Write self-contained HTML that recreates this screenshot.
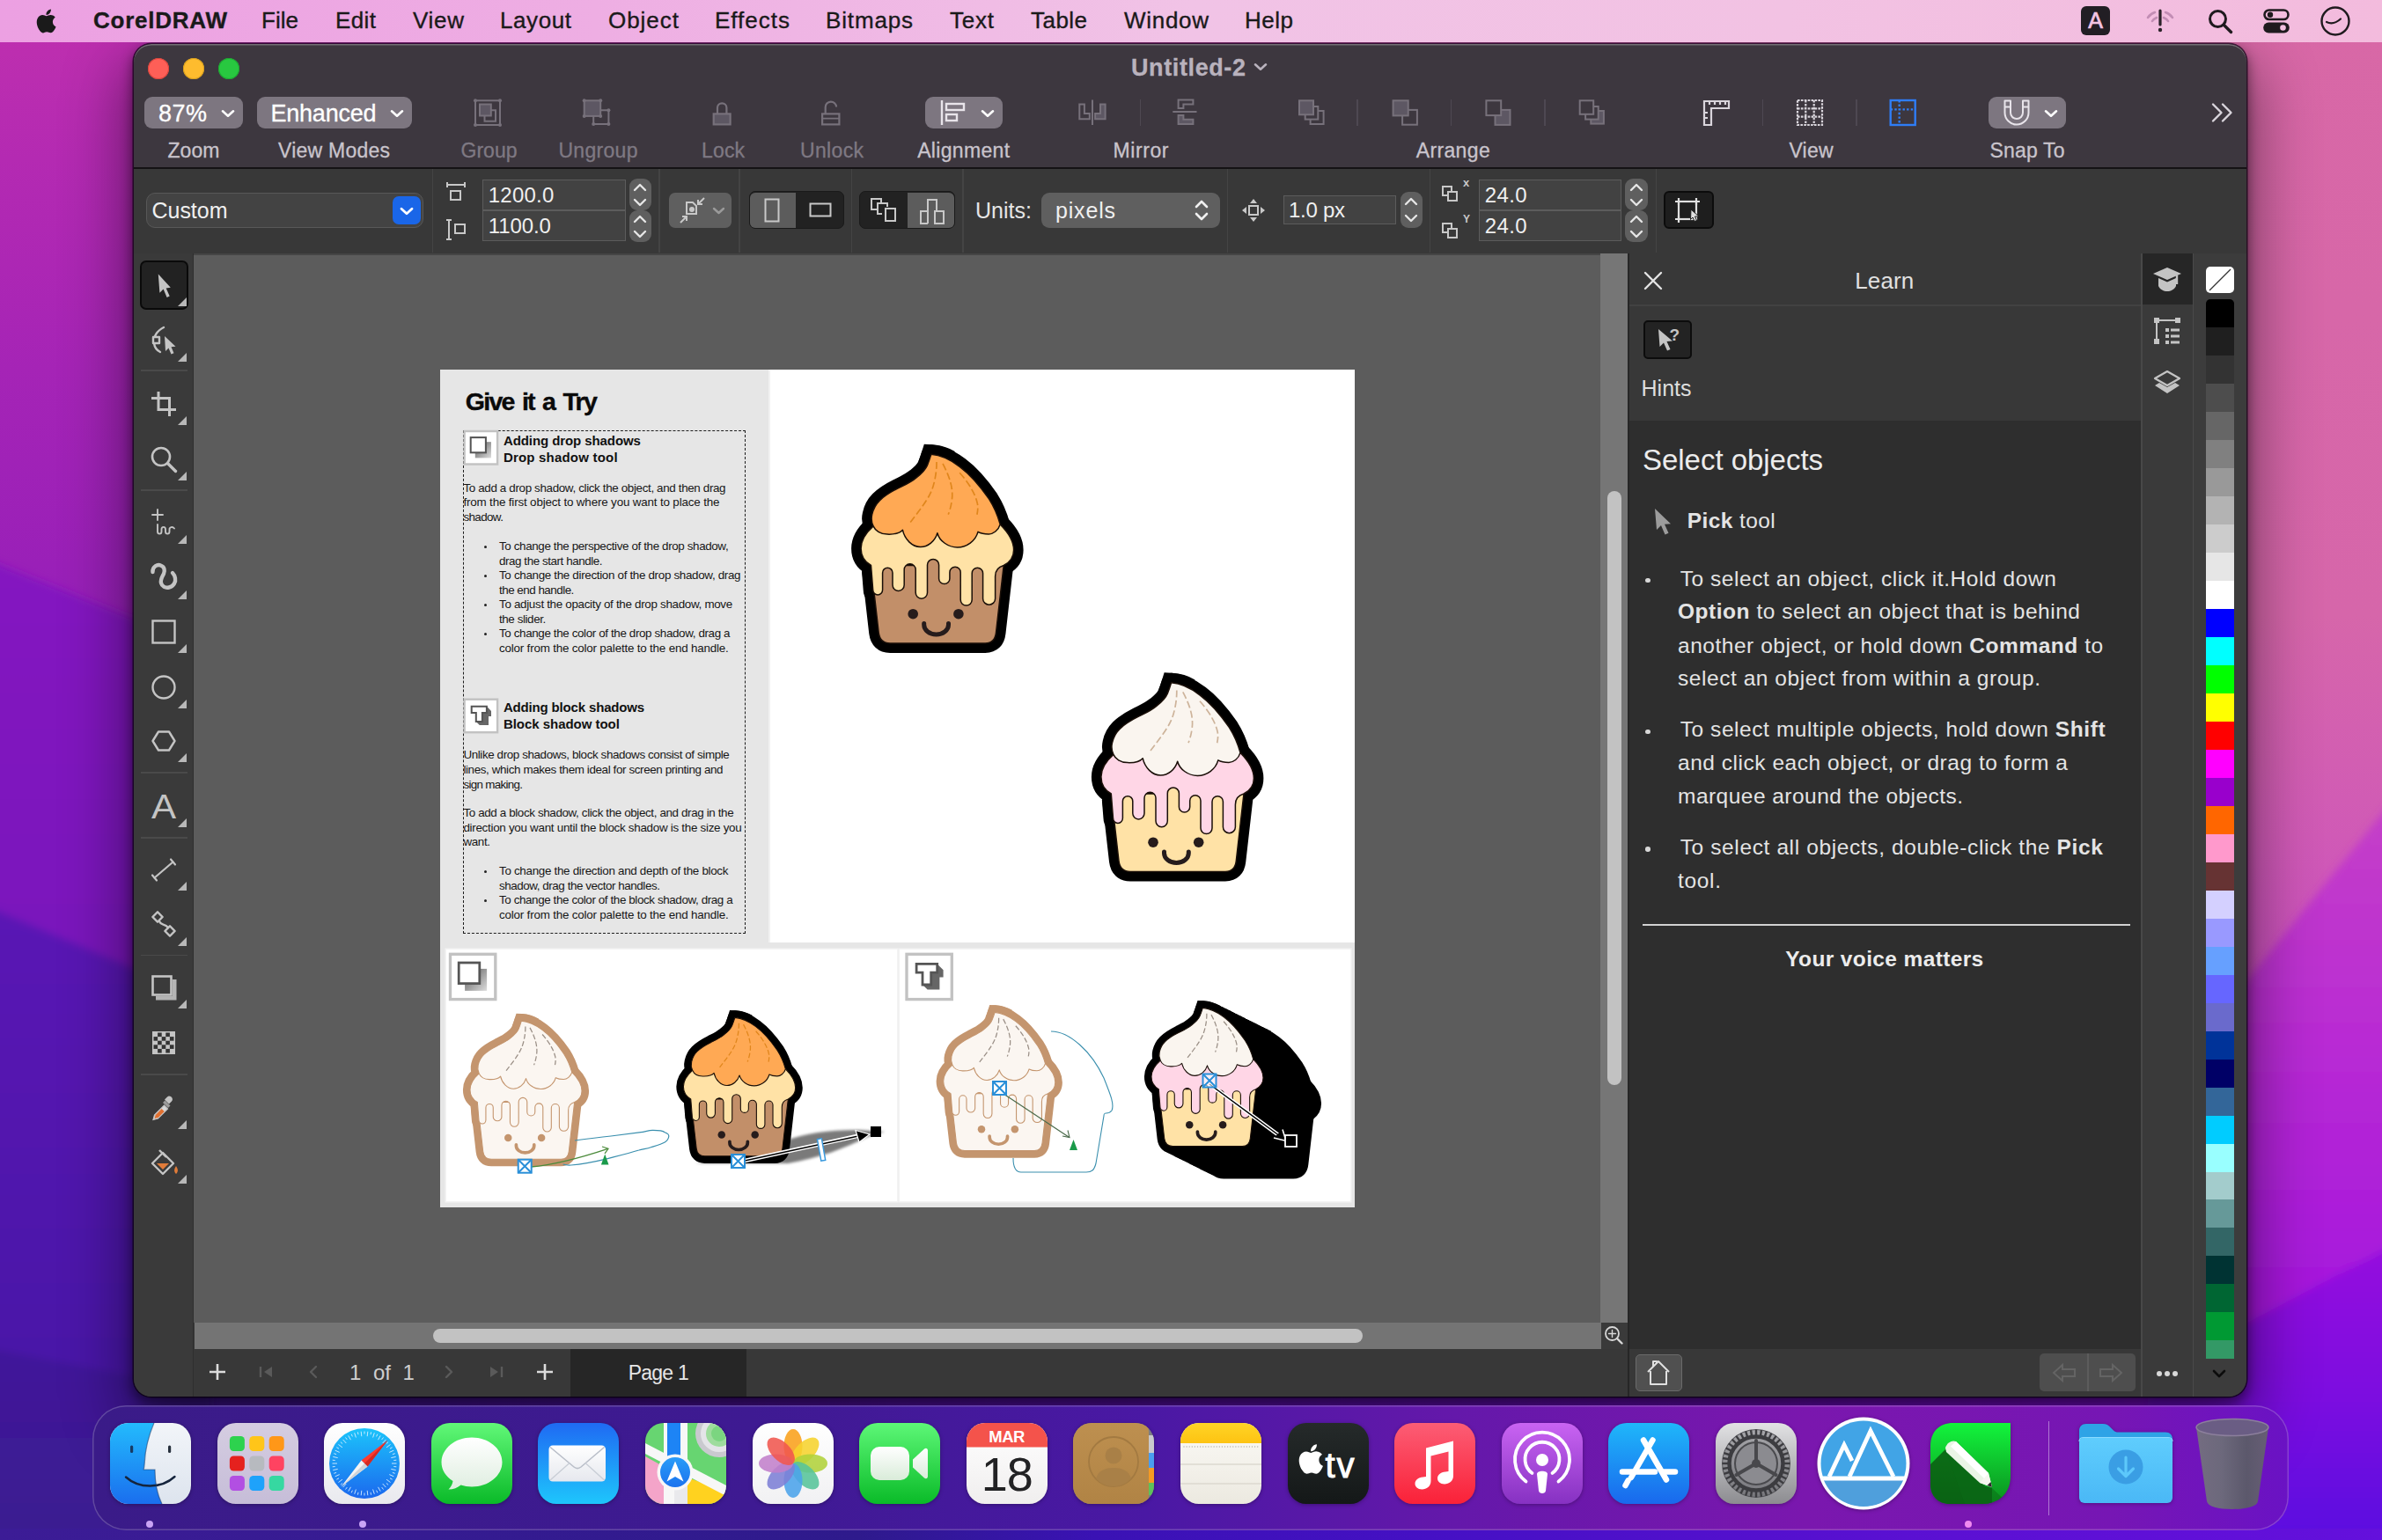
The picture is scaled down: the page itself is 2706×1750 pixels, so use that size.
<!DOCTYPE html>
<html lang="en"><head><meta charset="utf-8"><title>CorelDRAW - Untitled-2</title>
<style>
*{box-sizing:border-box;margin:0;padding:0}
html,body{width:2706px;height:1750px;overflow:hidden;background:#5a14b0}
body{position:relative;font-family:"Liberation Sans",sans-serif;}
.a{position:absolute;display:block}
.t{position:absolute;white-space:nowrap;line-height:1;display:block}
svg{overflow:visible}
.ln{stroke:#cfcfcf;fill:none;stroke-width:2.4;stroke-linecap:round;stroke-linejoin:round}
</style></head>
<body>
<div class="a" style="left:0.0px;top:0.0px;width:2706.0px;height:1750.0px;background:linear-gradient(180deg,#c030ae 0px,#b42ab2 180px,#a524b6 420px,#9a20b8 640px,#9420ba 760px,#8a1cbc 1000px,#6a16b8 1100px,#5612b2 1200px,#5012ae 1400px,#4a14a6 1560px,#3f1a98 1750px);"></div><div class="a" style="left:0.0px;top:0.0px;width:2706.0px;height:1750.0px;background:linear-gradient(180deg,#d868a6 0px,#d666aa 700px,#d05ab6 950px,#ca4ec0 1150px,#c040cc 1300px,#a818dc 1450px,#8a0ce0 1580px,#5a08dc 1750px);-webkit-mask-image:linear-gradient(90deg,transparent 0px,transparent 300px,rgba(0,0,0,.55) 1500px,#000 2450px);mask-image:linear-gradient(90deg,transparent 0px,transparent 300px,rgba(0,0,0,.55) 1500px,#000 2450px);"></div><svg class="a" style="left:0.0px;top:0.0px;" width="2706" height="1750" viewBox="0 0 2706 1750"><defs><filter id="wb" x="-10%" y="-10%" width="120%" height="120%"><feGaussianBlur stdDeviation="5"/></filter><linearGradient id="wa" gradientUnits="userSpaceOnUse" x1="0" y1="642" x2="0" y2="1040"><stop offset="0" stop-color="#8419c0"/><stop offset="1" stop-color="#7a18bc"/></linearGradient><linearGradient id="wbb" gradientUnits="userSpaceOnUse" x1="0" y1="1036" x2="0" y2="1530"><stop offset="0" stop-color="#5a13b4"/><stop offset="1" stop-color="#4a12a8"/></linearGradient><linearGradient id="wc" gradientUnits="userSpaceOnUse" x1="0" y1="1535" x2="0" y2="1750"><stop offset="0" stop-color="#41179a"/><stop offset="1" stop-color="#3a1c90"/></linearGradient><linearGradient id="ra" gradientUnits="userSpaceOnUse" x1="0" y1="925" x2="0" y2="1460"><stop offset="0" stop-color="#c43ec8"/><stop offset="0.5" stop-color="#b82ad4"/><stop offset="1" stop-color="#a618dc"/></linearGradient><linearGradient id="rb" gradientUnits="userSpaceOnUse" x1="0" y1="1422" x2="0" y2="1750"><stop offset="0" stop-color="#9410de"/><stop offset="0.5" stop-color="#7c0ce0"/><stop offset="1" stop-color="#5a0ce0"/></linearGradient></defs><g filter="url(#wb)"><path d="M-20 634L240 738V1800H-20Z" fill="url(#wa)"/><path d="M-20 1028L240 1137V1800H-20Z" fill="url(#wbb)"/><path d="M-20 1531L240 1580V1800H-20Z" fill="url(#wc)"/><path d="M2440 1253L2730 895V1800H2440Z" fill="url(#ra)"/><path d="M2440 1563L2730 1409V1800H2440Z" fill="url(#rb)"/></g></svg><div class="a" style="left:152.0px;top:50.0px;width:2400.0px;height:1537.0px;border-radius:20px;box-shadow:0 30px 70px 10px rgba(0,0,0,.45),0 6px 14px 2px rgba(0,0,0,.45),0 0 0 1.500px rgba(20,0,30,.7);background:#383838;"></div><div class="a" style="left:0.0px;top:0.0px;width:2706.0px;height:48.0px;background:linear-gradient(90deg,#eca0e2 0%,#eeaee3 25%,#f1c3e6 50%,#f2c2e3 75%,#f3bbdd 100%);"></div><svg class="a" style="left:38.0px;top:8.0px;" width="30" height="32" viewBox="0 0 30 32"><path fill="#1a1a1a" d="M21.9 16.9c0-3.4 2.8-5 2.9-5.1-1.6-2.3-4-2.6-4.9-2.7-2.1-.2-4.1 1.2-5.1 1.2-1.1 0-2.7-1.2-4.4-1.2-2.3 0-4.4 1.3-5.5 3.4-2.4 4.1-.6 10.1 1.7 13.5 1.1 1.6 2.5 3.4 4.2 3.4 1.7-.1 2.3-1.1 4.4-1.1 2 0 2.6 1.1 4.4 1 1.8 0 3-1.6 4.1-3.3 1.3-1.9 1.8-3.7 1.9-3.8-.1 0-3.6-1.400-3.700-5.300zM18.500 6.900c.900-1.100 1.600-2.700 1.400-4.300-1.400.1-3 .9-4 2.100-.900 1-1.700 2.600-1.400 4.200 1.500.100 3-.800 4-2z"/></svg><span id="t1" class="t" style="top:9.9px;font-size:26px;color:#1a1a1a;font-weight:700;letter-spacing:0.76px;left:106.0px;-webkit-text-stroke:.350px #1a1a1a;">CorelDRAW</span><span id="t2" class="t" style="top:9.9px;font-size:26px;color:#1a1a1a;letter-spacing:0.03px;left:297.0px;-webkit-text-stroke:.350px #1a1a1a;">File</span><span id="t3" class="t" style="top:9.9px;font-size:26px;color:#1a1a1a;letter-spacing:0.40px;left:381.0px;-webkit-text-stroke:.350px #1a1a1a;">Edit</span><span id="t4" class="t" style="top:9.9px;font-size:26px;color:#1a1a1a;letter-spacing:0.70px;left:469.0px;-webkit-text-stroke:.350px #1a1a1a;">View</span><span id="t5" class="t" style="top:9.9px;font-size:26px;color:#1a1a1a;letter-spacing:0.58px;left:568.0px;-webkit-text-stroke:.350px #1a1a1a;">Layout</span><span id="t6" class="t" style="top:9.9px;font-size:26px;color:#1a1a1a;letter-spacing:0.97px;left:691.0px;-webkit-text-stroke:.350px #1a1a1a;">Object</span><span id="t7" class="t" style="top:9.9px;font-size:26px;color:#1a1a1a;letter-spacing:1.00px;left:812.0px;-webkit-text-stroke:.350px #1a1a1a;">Effects</span><span id="t8" class="t" style="top:9.9px;font-size:26px;color:#1a1a1a;letter-spacing:0.85px;left:938.0px;-webkit-text-stroke:.350px #1a1a1a;">Bitmaps</span><span id="t9" class="t" style="top:9.9px;font-size:26px;color:#1a1a1a;letter-spacing:0.77px;left:1079.0px;-webkit-text-stroke:.350px #1a1a1a;">Text</span><span id="t10" class="t" style="top:9.9px;font-size:26px;color:#1a1a1a;letter-spacing:0.46px;left:1171.0px;-webkit-text-stroke:.350px #1a1a1a;">Table</span><span id="t11" class="t" style="top:9.9px;font-size:26px;color:#1a1a1a;letter-spacing:0.70px;left:1277.0px;-webkit-text-stroke:.350px #1a1a1a;">Window</span><span id="t12" class="t" style="top:9.9px;font-size:26px;color:#1a1a1a;letter-spacing:0.51px;left:1414.0px;-webkit-text-stroke:.350px #1a1a1a;">Help</span><div class="a" style="left:2364.0px;top:7.0px;width:33.0px;height:33.0px;background:#221e24;border-radius:6px;"></div><span id="t13" class="t" style="top:11.3px;font-size:25px;color:#f3c4e2;left:2380.5px;transform:translateX(-50%);-webkit-text-stroke:.700px #f3c4e2;">A</span><svg class="a" style="left:2436.0px;top:8.0px;" width="36" height="32" viewBox="0 0 36 32"><g fill="none" stroke="#c28db4" stroke-width="2.6" stroke-linecap="round"><path d="M4 12c2-3 5-5 8-6"/><path d="M32 12c-2-3-5-5-8-6"/><path d="M9 16c1-2 3-3 5-4"/><path d="M27 16c-1-2-3-3-5-4"/></g><path d="M18 4v16" stroke="#2a2228" stroke-width="3.2" stroke-linecap="round"/><circle cx="18" cy="26" r="2.2" fill="#2a2228"/></svg><svg class="a" style="left:2506.0px;top:8.0px;" width="32" height="32" viewBox="0 0 32 32"><circle cx="13.5" cy="13.500" r="9" fill="none" stroke="#1f1a1e" stroke-width="3"/><path d="M20.500 20.500l8 8" stroke="#1f1a1e" stroke-width="3.400" stroke-linecap="round"/></svg><svg class="a" style="left:2571.0px;top:10.0px;" width="30" height="28" viewBox="0 0 30 28"><rect x="1.500" y="1.500" width="27" height="10.500" rx="5.250" fill="none" stroke="#1f1a1e" stroke-width="2.600"/><circle cx="8" cy="6.750" r="3.200" fill="#1f1a1e"/><rect x="0.200" y="15.500" width="29.600" height="12" rx="6" fill="#1f1a1e"/><circle cx="22.500" cy="21.500" r="3.300" fill="#f3bfe0"/></svg><svg class="a" style="left:2635.0px;top:6.0px;" width="36" height="36" viewBox="0 0 36 36"><circle cx="18" cy="18" r="15.500" fill="none" stroke="#1f1a1e" stroke-width="2.400"/><path d="M8 19c5 2.500 11 1 16-3.500" fill="none" stroke="#1f1a1e" stroke-width="2.200" stroke-linecap="round"/></svg><div class="a" style="left:0.0px;top:1737.0px;width:2706.0px;height:13.0px;background:linear-gradient(90deg,#3c1c96 0%,#2e1a8c 36%,#3a12b4 46%,#4510c4 60%,#5a10d2 80%,#6410dc 100%);"></div><div class="a" style="left:105.0px;top:1597.0px;width:2495.0px;height:142.0px;border-radius:38px;background:linear-gradient(90deg,#3a1b88 0%,#3e1a92 30%,#4a18a4 48%,#6418aa 62%,#7a17ae 78%,#7616b4 92%,#6a12c4 100%);box-shadow:inset 0 0 0 1.500px rgba(255,255,255,.2);"></div><svg class="a" style="left:125.0px;top:1617px;filter:drop-shadow(0 1.500px 2px rgba(0,0,0,.3));" width="92" height="92" viewBox="0 0 92 92"><defs><clipPath id="ck0"><rect width="92" height="92" rx="21"/></clipPath><linearGradient id="f0a" x1="0" y1="0" x2="0" y2="1"><stop offset="0" stop-color="#23bbfd"/><stop offset="1" stop-color="#1a6eee"/></linearGradient><linearGradient id="f0b" x1="0" y1="0" x2="0" y2="1"><stop offset="0" stop-color="#f2f5f9"/><stop offset="1" stop-color="#dde4ee"/></linearGradient></defs><g clip-path="url(#ck0)"><rect width="92" height="92" fill="url(#f0b)"/><path d="M50 0C44 14 40 30 39.300 45C39 49 38.600 51.500 38.200 53L51 53C51 68 54 82 59 92L0 92L0 0Z" fill="url(#f0a)"/><rect x="23" y="25.500" width="3.200" height="8.500" rx="1.600" fill="#173a63"/><rect x="66" y="25.500" width="3.200" height="8.500" rx="1.600" fill="#26303c"/><path d="M18 61.500C33 75 58 75 73.500 61" fill="none" stroke="#15243c" stroke-width="2.400" stroke-linecap="round"/><path d="M50 0C44 14 40 30 39.300 45C39 49 38.600 51.500 38.200 53L51 53C51 68 54 82 59 92" fill="none" stroke="#1a3a6a" stroke-width="1.200" opacity=".55"/></g></svg><svg class="a" style="left:246.6px;top:1617px;filter:drop-shadow(0 1.500px 2px rgba(0,0,0,.3));" width="92" height="92" viewBox="0 0 92 92"><defs><clipPath id="ck1"><rect width="92" height="92" rx="21"/></clipPath><linearGradient id="l1" x1="0" y1="0" x2="0" y2="1"><stop offset="0" stop-color="#d5cde1"/><stop offset="1" stop-color="#c6bdd8"/></linearGradient></defs><g clip-path="url(#ck1)"><rect width="92" height="92" fill="url(#l1)"/><rect x="13.9" y="15.0" width="17" height="17" rx="4.500" fill="#2dd24e"/><rect x="36.3" y="15.0" width="17" height="17" rx="4.500" fill="#ffc519"/><rect x="58.7" y="15.0" width="17" height="17" rx="4.500" fill="#ff9718"/><rect x="13.9" y="37.5" width="17" height="17" rx="4.500" fill="#e5211e"/><rect x="36.3" y="37.5" width="17" height="17" rx="4.500" fill="#b7babf"/><rect x="58.7" y="37.5" width="17" height="17" rx="4.500" fill="#ff4361"/><rect x="13.9" y="60.0" width="17" height="17" rx="4.500" fill="#b24fe2"/><rect x="36.3" y="60.0" width="17" height="17" rx="4.500" fill="#1ea2fb"/><rect x="58.7" y="60.0" width="17" height="17" rx="4.500" fill="#36d8a1"/></g></svg><svg class="a" style="left:368.2px;top:1617px;filter:drop-shadow(0 1.500px 2px rgba(0,0,0,.3));" width="92" height="92" viewBox="0 0 92 92"><defs><clipPath id="ck2"><rect width="92" height="92" rx="21"/></clipPath><linearGradient id="s2" x1="0" y1="0" x2="0" y2="1"><stop offset="0" stop-color="#1cc4fb"/><stop offset="1" stop-color="#1b68ee"/></linearGradient><linearGradient id="s2b" x1="0" y1="0" x2="0" y2="1"><stop offset="0" stop-color="#ffffff"/><stop offset="1" stop-color="#e9e9ee"/></linearGradient></defs><g clip-path="url(#ck2)"><rect width="92" height="92" fill="url(#s2b)"/><circle cx="46" cy="46" r="40" fill="url(#s2)"/><g stroke="#d9efff" stroke-width="0.900"><path d="M77.0 46.0L82.5 46.0"/><path d="M79.3 49.5L82.3 49.8"/><path d="M76.3 52.4L81.7 53.6"/><path d="M77.9 56.4L80.7 57.3"/><path d="M74.3 58.6L79.3 60.8"/><path d="M75.0 62.8L77.6 64.2"/><path d="M71.1 64.2L75.5 67.5"/><path d="M70.9 68.4L73.1 70.4"/><path d="M66.7 69.0L70.4 73.1"/><path d="M65.7 73.1L67.5 75.5"/><path d="M61.5 72.8L64.2 77.6"/><path d="M59.6 76.6L60.8 79.3"/><path d="M55.6 75.5L57.3 80.7"/><path d="M53.0 78.8L53.6 81.7"/><path d="M49.2 76.8L49.8 82.3"/><path d="M46.0 79.5L46.0 82.5"/><path d="M42.8 76.8L42.2 82.3"/><path d="M39.0 78.8L38.4 81.7"/><path d="M36.4 75.5L34.7 80.7"/><path d="M32.4 76.6L31.2 79.3"/><path d="M30.5 72.8L27.8 77.6"/><path d="M26.3 73.1L24.5 75.5"/><path d="M25.3 69.0L21.6 73.1"/><path d="M21.1 68.4L18.9 70.4"/><path d="M20.9 64.2L16.5 67.5"/><path d="M17.0 62.8L14.4 64.2"/><path d="M17.7 58.6L12.7 60.8"/><path d="M14.1 56.4L11.3 57.3"/><path d="M15.7 52.4L10.3 53.6"/><path d="M12.7 49.5L9.7 49.8"/><path d="M15.0 46.0L9.5 46.0"/><path d="M12.7 42.5L9.7 42.2"/><path d="M15.7 39.6L10.3 38.4"/><path d="M14.1 35.6L11.3 34.7"/><path d="M17.7 33.4L12.7 31.2"/><path d="M17.0 29.2L14.4 27.7"/><path d="M20.9 27.8L16.5 24.5"/><path d="M21.1 23.6L18.9 21.6"/><path d="M25.3 23.0L21.6 18.9"/><path d="M26.3 18.9L24.5 16.5"/><path d="M30.5 19.2L27.7 14.4"/><path d="M32.4 15.4L31.2 12.7"/><path d="M36.4 16.5L34.7 11.3"/><path d="M39.0 13.2L38.4 10.3"/><path d="M42.8 15.2L42.2 9.7"/><path d="M46.0 12.5L46.0 9.5"/><path d="M49.2 15.2L49.8 9.7"/><path d="M53.0 13.2L53.6 10.3"/><path d="M55.6 16.5L57.3 11.3"/><path d="M59.6 15.4L60.8 12.7"/><path d="M61.5 19.2L64.2 14.4"/><path d="M65.7 18.9L67.5 16.5"/><path d="M66.7 23.0L70.4 18.9"/><path d="M70.9 23.6L73.1 21.6"/><path d="M71.1 27.8L75.5 24.5"/><path d="M75.0 29.2L77.6 27.7"/><path d="M74.3 33.4L79.3 31.2"/><path d="M77.9 35.6L80.7 34.7"/><path d="M76.3 39.6L81.7 38.4"/><path d="M79.3 42.5L82.3 42.2"/></g><path d="M72.500 19.500L42.500 42.500L49.500 49.500Z" fill="#ff3b30"/><path d="M19.500 72.500L42.500 42.500L49.500 49.500Z" fill="#f4f4f4"/><path d="M72.500 19.500L49.500 49.500L46 46Z" fill="#d42a22"/><path d="M19.500 72.500L49.500 49.500L46 46Z" fill="#cfd3d8"/></g></svg><svg class="a" style="left:489.8px;top:1617px;filter:drop-shadow(0 1.500px 2px rgba(0,0,0,.3));" width="92" height="92" viewBox="0 0 92 92"><defs><clipPath id="ck3"><rect width="92" height="92" rx="21"/></clipPath><linearGradient id="m3" x1="0" y1="0" x2="0" y2="1"><stop offset="0" stop-color="#61f878"/><stop offset="1" stop-color="#0aba28"/></linearGradient><linearGradient id="m3b" x1="0" y1="0" x2="0" y2="1"><stop offset="0" stop-color="#ffffff"/><stop offset="1" stop-color="#dfeee0"/></linearGradient></defs><g clip-path="url(#ck3)"><rect width="92" height="92" fill="url(#m3)"/><path d="M46 16.500C27 16.500 11.500 29 11.500 44.500C11.500 53.500 16.500 61 24.500 66C24 70 22 73 19.500 75.500C25 75.500 30 73.500 33.500 70.500C37.500 71.800 41.500 72.500 46 72.500C65 72.500 80.500 60 80.500 44.500C80.500 29 65 16.500 46 16.500Z" fill="url(#m3b)"/></g></svg><svg class="a" style="left:611.4px;top:1617px;filter:drop-shadow(0 1.500px 2px rgba(0,0,0,.3));" width="92" height="92" viewBox="0 0 92 92"><defs><clipPath id="ck4"><rect width="92" height="92" rx="21"/></clipPath><linearGradient id="ml" x1="0" y1="0" x2="0" y2="1"><stop offset="0" stop-color="#1f6af3"/><stop offset="1" stop-color="#1ec6fc"/></linearGradient><linearGradient id="mlb" x1="0" y1="0" x2="0" y2="1"><stop offset="0" stop-color="#ffffff"/><stop offset="1" stop-color="#e6e8ee"/></linearGradient></defs><g clip-path="url(#ck4)"><rect width="92" height="92" fill="url(#ml)"/><rect x="12.500" y="25.500" width="64.500" height="41" rx="4.500" fill="url(#mlb)"/><path d="M14 27.500L41 50C43.500 52 46.500 52 49 50L75.500 27.500" fill="none" stroke="#b9bec8" stroke-width="1.600"/><path d="M14 65L36 45.500M75.500 65L54 45.500" fill="none" stroke="#c9ced6" stroke-width="1.400"/></g></svg><svg class="a" style="left:733.0px;top:1617px;filter:drop-shadow(0 1.500px 2px rgba(0,0,0,.3));" width="92" height="92" viewBox="0 0 92 92"><defs><clipPath id="ck5"><rect width="92" height="92" rx="21"/></clipPath><linearGradient id="mp" x1="0" y1="0" x2="0" y2="1"><stop offset="0" stop-color="#2a9cf8"/><stop offset="1" stop-color="#1a73ee"/></linearGradient></defs><g clip-path="url(#ck5)"><rect width="92" height="92" fill="#67d571"/><path d="M0 38L40 60L40 92L0 92Z" fill="#f4a4c9"/><path d="M48 62L92 78L92 92L48 92Z" fill="#ffd21f"/><path d="M-2 22L94 72L94 84L-2 34Z" fill="#f7f7f7"/><path d="M21 -2L21 94L33 94L33 -2Z" fill="#f7f7f7"/><circle cx="84" cy="12" r="27" fill="#c9c9cf"/><circle cx="84" cy="12" r="21" fill="#e4e4e8"/><circle cx="84" cy="12" r="15" fill="#9edc9d"/><circle cx="84" cy="12" r="9" fill="#7bd580"/><rect x="25" y="-2" width="20" height="60" fill="#1d84f5"/><rect x="40" y="-2" width="8" height="96" fill="#f7f7f7"/><path d="M33 58L48 64L48 94L33 94Z" fill="#e9e9ec"/><circle cx="34" cy="56" r="20.500" fill="#f7f7f7"/><circle cx="34" cy="56" r="17" fill="url(#mp)"/><path d="M34 43.500L43.500 66.500L34 61L24.500 66.500Z" fill="#fff"/></g></svg><svg class="a" style="left:854.6px;top:1617px;filter:drop-shadow(0 1.500px 2px rgba(0,0,0,.3));" width="92" height="92" viewBox="0 0 92 92"><defs><clipPath id="ck6"><rect width="92" height="92" rx="21"/></clipPath><linearGradient id="ph" x1="0" y1="0" x2="0" y2="1"><stop offset="0" stop-color="#ffffff"/><stop offset="1" stop-color="#f1f1f3"/></linearGradient></defs><g clip-path="url(#ck6)"><rect width="92" height="92" fill="url(#ph)"/><ellipse cx="46" cy="26.500" rx="10.500" ry="19.500" fill="#f9a11b" opacity=".88" transform="rotate(0 46 46)"/><ellipse cx="46" cy="26.500" rx="10.500" ry="19.500" fill="#f6d32d" opacity=".88" transform="rotate(45 46 46)"/><ellipse cx="46" cy="26.500" rx="10.500" ry="19.500" fill="#b0d23a" opacity=".88" transform="rotate(90 46 46)"/><ellipse cx="46" cy="26.500" rx="10.500" ry="19.500" fill="#57c49a" opacity=".88" transform="rotate(135 46 46)"/><ellipse cx="46" cy="26.500" rx="10.500" ry="19.500" fill="#4ba3ea" opacity=".88" transform="rotate(180 46 46)"/><ellipse cx="46" cy="26.500" rx="10.500" ry="19.500" fill="#7d7fd6" opacity=".88" transform="rotate(225 46 46)"/><ellipse cx="46" cy="26.500" rx="10.500" ry="19.500" fill="#c27fcb" opacity=".88" transform="rotate(270 46 46)"/><ellipse cx="46" cy="26.500" rx="10.500" ry="19.500" fill="#f0564f" opacity=".88" transform="rotate(315 46 46)"/></g></svg><svg class="a" style="left:976.2px;top:1617px;filter:drop-shadow(0 1.500px 2px rgba(0,0,0,.3));" width="92" height="92" viewBox="0 0 92 92"><defs><clipPath id="ck7"><rect width="92" height="92" rx="21"/></clipPath><linearGradient id="ft" x1="0" y1="0" x2="0" y2="1"><stop offset="0" stop-color="#5df777"/><stop offset="1" stop-color="#0abb28"/></linearGradient><linearGradient id="ftb" x1="0" y1="0" x2="0" y2="1"><stop offset="0" stop-color="#ffffff"/><stop offset="1" stop-color="#d9ecd9"/></linearGradient></defs><g clip-path="url(#ck7)"><rect width="92" height="92" fill="url(#ft)"/><rect x="13" y="27" width="44" height="38" rx="10" fill="url(#ftb)"/><path d="M61 41.500L74 29.500C76 28 78 29 78 31.500L78 60.500C78 63 76 64 74 62.500L61 50.500Z" fill="url(#ftb)"/></g></svg><svg class="a" style="left:1097.8px;top:1617px;filter:drop-shadow(0 1.500px 2px rgba(0,0,0,.3));" width="92" height="92" viewBox="0 0 92 92"><defs><clipPath id="ck8"><rect width="92" height="92" rx="21"/></clipPath><linearGradient id="cl" x1="0" y1="0" x2="0" y2="1"><stop offset="0" stop-color="#ffffff"/><stop offset="1" stop-color="#f0eeee"/></linearGradient></defs><g clip-path="url(#ck8)"><rect width="92" height="92" fill="url(#cl)"/><rect width="92" height="27.500" fill="#f4534b"/></g></svg><span id="t14" class="t" style="top:1623.5px;font-size:18.5px;color:#fff;font-weight:700;letter-spacing:-0.57px;left:1143.5px;transform:translateX(-50%);">MAR</span><span id="t15" class="t" style="top:1648.1px;font-size:54px;color:#222224;left:1143.8px;transform:translateX(-50%);letter-spacing:-1px;">18</span><svg class="a" style="left:1219.4px;top:1617px;filter:drop-shadow(0 1.500px 2px rgba(0,0,0,.3));" width="92" height="92" viewBox="0 0 92 92"><defs><clipPath id="ck9"><rect width="92" height="92" rx="21"/></clipPath><linearGradient id="ct" x1="0" y1="0" x2="0" y2="1"><stop offset="0" stop-color="#be9050"/><stop offset="1" stop-color="#b08344"/></linearGradient></defs><g clip-path="url(#ck9)"><rect width="92" height="92" fill="#7d7d82"/><rect x="84" y="14" width="10" height="20" fill="#c9c9cd"/><rect x="84" y="34" width="10" height="17" fill="#4a9df0"/><rect x="84" y="51" width="10" height="17" fill="#f59a23"/><rect x="84" y="68" width="10" height="14" fill="#5ec15a"/><rect x="-4" y="-4" width="90" height="100" rx="14" fill="url(#ct)"/><circle cx="46" cy="44" r="28" fill="none" stroke="#a37a41" stroke-width="1.800"/><circle cx="46" cy="37" r="9.500" fill="#a98047"/><path d="M26 63C29 54 36 51 46 51C56 51 63 54 66 63C61 69 54 72 46 72C38 72 31 69 26 63Z" fill="#a98047"/></g></svg><svg class="a" style="left:1341.0px;top:1617px;filter:drop-shadow(0 1.500px 2px rgba(0,0,0,.3));" width="92" height="92" viewBox="0 0 92 92"><defs><clipPath id="ck10"><rect width="92" height="92" rx="21"/></clipPath><linearGradient id="nt" x1="0" y1="0" x2="0" y2="1"><stop offset="0" stop-color="#fbfaf6"/><stop offset="1" stop-color="#ece9e0"/></linearGradient><linearGradient id="ntb" x1="0" y1="0" x2="0" y2="1"><stop offset="0" stop-color="#ffd426"/><stop offset="1" stop-color="#fdc312"/></linearGradient></defs><g clip-path="url(#ck10)"><rect width="92" height="92" fill="url(#nt)"/><rect width="92" height="23" fill="url(#ntb)"/><circle cx="4.0" cy="27" r=".700" fill="#b5b2a8"/><circle cx="7.1" cy="27" r=".700" fill="#b5b2a8"/><circle cx="10.2" cy="27" r=".700" fill="#b5b2a8"/><circle cx="13.3" cy="27" r=".700" fill="#b5b2a8"/><circle cx="16.4" cy="27" r=".700" fill="#b5b2a8"/><circle cx="19.5" cy="27" r=".700" fill="#b5b2a8"/><circle cx="22.6" cy="27" r=".700" fill="#b5b2a8"/><circle cx="25.7" cy="27" r=".700" fill="#b5b2a8"/><circle cx="28.8" cy="27" r=".700" fill="#b5b2a8"/><circle cx="31.9" cy="27" r=".700" fill="#b5b2a8"/><circle cx="35.0" cy="27" r=".700" fill="#b5b2a8"/><circle cx="38.1" cy="27" r=".700" fill="#b5b2a8"/><circle cx="41.2" cy="27" r=".700" fill="#b5b2a8"/><circle cx="44.3" cy="27" r=".700" fill="#b5b2a8"/><circle cx="47.4" cy="27" r=".700" fill="#b5b2a8"/><circle cx="50.5" cy="27" r=".700" fill="#b5b2a8"/><circle cx="53.6" cy="27" r=".700" fill="#b5b2a8"/><circle cx="56.7" cy="27" r=".700" fill="#b5b2a8"/><circle cx="59.8" cy="27" r=".700" fill="#b5b2a8"/><circle cx="62.9" cy="27" r=".700" fill="#b5b2a8"/><circle cx="66.0" cy="27" r=".700" fill="#b5b2a8"/><circle cx="69.1" cy="27" r=".700" fill="#b5b2a8"/><circle cx="72.2" cy="27" r=".700" fill="#b5b2a8"/><circle cx="75.3" cy="27" r=".700" fill="#b5b2a8"/><circle cx="78.4" cy="27" r=".700" fill="#b5b2a8"/><circle cx="81.5" cy="27" r=".700" fill="#b5b2a8"/><circle cx="84.6" cy="27" r=".700" fill="#b5b2a8"/><circle cx="87.7" cy="27" r=".700" fill="#b5b2a8"/><path d="M0 47H92M0 69H92" stroke="#dcd9d0" stroke-width="1.300"/></g></svg><svg class="a" style="left:1462.6px;top:1617px;filter:drop-shadow(0 1.500px 2px rgba(0,0,0,.3));" width="92" height="92" viewBox="0 0 92 92"><defs><clipPath id="ck11"><rect width="92" height="92" rx="21"/></clipPath><linearGradient id="tv" x1="0" y1="0" x2="0" y2="1"><stop offset="0" stop-color="#252a2a"/><stop offset="1" stop-color="#141818"/></linearGradient></defs><g clip-path="url(#ck11)"><rect width="92" height="92" fill="url(#tv)"/><path transform="translate(8 21) scale(1.250)" fill="#fff" d="M21.900 16.900c0-3.400 2.800-5 2.900-5.100-1.600-2.300-4-2.600-4.900-2.700-2.100-.2-4.100 1.200-5.100 1.200-1.100 0-2.700-1.200-4.400-1.200-2.300 0-4.400 1.300-5.500 3.400-2.400 4.100-.6 10.100 1.700 13.500 1.100 1.600 2.500 3.400 4.200 3.400 1.700-.1 2.300-1.100 4.400-1.100 2 0 2.600 1.100 4.400 1 1.800 0 3-1.600 4.100-3.300 1.300-1.900 1.800-3.700 1.900-3.800-.1 0-3.600-1.400-3.700-5.300zM18.500 6.900c.9-1.100 1.600-2.700 1.400-4.300-1.400.1-3 .9-4 2.100-.9 1-1.700 2.600-1.400 4.200 1.500.1 3-.8 4-2z"/></g></svg><span id="t16" class="t" style="top:1645.0px;font-size:40px;color:#fff;letter-spacing:1.88px;left:1505.6px;-webkit-text-stroke:1px #fff;">tv</span><svg class="a" style="left:1584.2px;top:1617px;filter:drop-shadow(0 1.500px 2px rgba(0,0,0,.3));" width="92" height="92" viewBox="0 0 92 92"><defs><clipPath id="ck12"><rect width="92" height="92" rx="21"/></clipPath><linearGradient id="mu" x1="0" y1="0" x2="0" y2="1"><stop offset="0" stop-color="#fc5d75"/><stop offset="1" stop-color="#fa2138"/></linearGradient></defs><g clip-path="url(#ck12)"><rect width="92" height="92" fill="url(#mu)"/><path d="M36 28.500L67 20.500L67 60C67 66 62 69.500 57 69.500C52 69.500 49 66.500 49 63C49 59 52.500 56 58 55.500L61.500 55L61.500 32.500L41.500 37.500L41.500 66C41.500 72 36.500 75.500 31.500 75.500C26.500 75.500 23.500 72.500 23.500 69C23.500 65 27 62 32.500 61.500L36 61Z" fill="#fff"/></g></svg><svg class="a" style="left:1705.8px;top:1617px;filter:drop-shadow(0 1.500px 2px rgba(0,0,0,.3));" width="92" height="92" viewBox="0 0 92 92"><defs><clipPath id="ck13"><rect width="92" height="92" rx="21"/></clipPath><linearGradient id="pc" x1="0" y1="0" x2="0" y2="1"><stop offset="0" stop-color="#c964f2"/><stop offset="1" stop-color="#8631c2"/></linearGradient></defs><g clip-path="url(#ck13)"><rect width="92" height="92" fill="url(#pc)"/><g fill="none" stroke="#fff" stroke-width="3.800" stroke-linecap="round"><path d="M27.500 66.500A31 31 0 1 1 64.500 66.500"/><path d="M34.500 57A19.500 19.500 0 1 1 57.500 57"/></g><circle cx="46" cy="42" r="7" fill="#fff"/><path d="M40 58C40 53.500 52 53.500 52 58L50 77C49.500 81 42.500 81 42 77Z" fill="#fff"/></g></svg><svg class="a" style="left:1827.4px;top:1617px;filter:drop-shadow(0 1.500px 2px rgba(0,0,0,.3));" width="92" height="92" viewBox="0 0 92 92"><defs><clipPath id="ck14"><rect width="92" height="92" rx="21"/></clipPath><linearGradient id="as" x1="0" y1="0" x2="0" y2="1"><stop offset="0" stop-color="#1fb7fa"/><stop offset="1" stop-color="#1968ed"/></linearGradient></defs><g clip-path="url(#ck14)"><rect width="92" height="92" fill="url(#as)"/><g stroke="#fff" stroke-width="6.500" stroke-linecap="round" fill="none"><path d="M50.500 19.500L26 62"/><path d="M40 19.500L66 64.500"/><path d="M16 55.500H53"/><path d="M63.500 55.500H76"/><path d="M19.500 71L22.500 65.500"/></g></g></svg><svg class="a" style="left:1949.0px;top:1617px;filter:drop-shadow(0 1.500px 2px rgba(0,0,0,.3));" width="92" height="92" viewBox="0 0 92 92"><defs><clipPath id="ck15"><rect width="92" height="92" rx="21"/></clipPath><linearGradient id="st" x1="0" y1="0" x2="0" y2="1"><stop offset="0" stop-color="#e2e2e4"/><stop offset="1" stop-color="#8c8c90"/></linearGradient><linearGradient id="stg" x1="0" y1="0" x2="0" y2="1"><stop offset="0" stop-color="#a6a6aa"/><stop offset="1" stop-color="#77777c"/></linearGradient></defs><g clip-path="url(#ck15)"><rect width="92" height="92" fill="url(#st)"/><circle cx="46" cy="46" r="39" fill="#55555a"/><circle cx="46" cy="46" r="38" fill="url(#stg)"/><rect x="44.800" y="7.500" width="2.400" height="7" fill="#3c3c40" transform="rotate(0 46 46)"/><rect x="44.800" y="7.500" width="2.400" height="7" fill="#3c3c40" transform="rotate(9 46 46)"/><rect x="44.800" y="7.500" width="2.400" height="7" fill="#3c3c40" transform="rotate(18 46 46)"/><rect x="44.800" y="7.500" width="2.400" height="7" fill="#3c3c40" transform="rotate(27 46 46)"/><rect x="44.800" y="7.500" width="2.400" height="7" fill="#3c3c40" transform="rotate(36 46 46)"/><rect x="44.800" y="7.500" width="2.400" height="7" fill="#3c3c40" transform="rotate(45 46 46)"/><rect x="44.800" y="7.500" width="2.400" height="7" fill="#3c3c40" transform="rotate(54 46 46)"/><rect x="44.800" y="7.500" width="2.400" height="7" fill="#3c3c40" transform="rotate(63 46 46)"/><rect x="44.800" y="7.500" width="2.400" height="7" fill="#3c3c40" transform="rotate(72 46 46)"/><rect x="44.800" y="7.500" width="2.400" height="7" fill="#3c3c40" transform="rotate(81 46 46)"/><rect x="44.800" y="7.500" width="2.400" height="7" fill="#3c3c40" transform="rotate(90 46 46)"/><rect x="44.800" y="7.500" width="2.400" height="7" fill="#3c3c40" transform="rotate(99 46 46)"/><rect x="44.800" y="7.500" width="2.400" height="7" fill="#3c3c40" transform="rotate(108 46 46)"/><rect x="44.800" y="7.500" width="2.400" height="7" fill="#3c3c40" transform="rotate(117 46 46)"/><rect x="44.800" y="7.500" width="2.400" height="7" fill="#3c3c40" transform="rotate(126 46 46)"/><rect x="44.800" y="7.500" width="2.400" height="7" fill="#3c3c40" transform="rotate(135 46 46)"/><rect x="44.800" y="7.500" width="2.400" height="7" fill="#3c3c40" transform="rotate(144 46 46)"/><rect x="44.800" y="7.500" width="2.400" height="7" fill="#3c3c40" transform="rotate(153 46 46)"/><rect x="44.800" y="7.500" width="2.400" height="7" fill="#3c3c40" transform="rotate(162 46 46)"/><rect x="44.800" y="7.500" width="2.400" height="7" fill="#3c3c40" transform="rotate(171 46 46)"/><rect x="44.800" y="7.500" width="2.400" height="7" fill="#3c3c40" transform="rotate(180 46 46)"/><rect x="44.800" y="7.500" width="2.400" height="7" fill="#3c3c40" transform="rotate(189 46 46)"/><rect x="44.800" y="7.500" width="2.400" height="7" fill="#3c3c40" transform="rotate(198 46 46)"/><rect x="44.800" y="7.500" width="2.400" height="7" fill="#3c3c40" transform="rotate(207 46 46)"/><rect x="44.800" y="7.500" width="2.400" height="7" fill="#3c3c40" transform="rotate(216 46 46)"/><rect x="44.800" y="7.500" width="2.400" height="7" fill="#3c3c40" transform="rotate(225 46 46)"/><rect x="44.800" y="7.500" width="2.400" height="7" fill="#3c3c40" transform="rotate(234 46 46)"/><rect x="44.800" y="7.500" width="2.400" height="7" fill="#3c3c40" transform="rotate(243 46 46)"/><rect x="44.800" y="7.500" width="2.400" height="7" fill="#3c3c40" transform="rotate(252 46 46)"/><rect x="44.800" y="7.500" width="2.400" height="7" fill="#3c3c40" transform="rotate(261 46 46)"/><rect x="44.800" y="7.500" width="2.400" height="7" fill="#3c3c40" transform="rotate(270 46 46)"/><rect x="44.800" y="7.500" width="2.400" height="7" fill="#3c3c40" transform="rotate(279 46 46)"/><rect x="44.800" y="7.500" width="2.400" height="7" fill="#3c3c40" transform="rotate(288 46 46)"/><rect x="44.800" y="7.500" width="2.400" height="7" fill="#3c3c40" transform="rotate(297 46 46)"/><rect x="44.800" y="7.500" width="2.400" height="7" fill="#3c3c40" transform="rotate(306 46 46)"/><rect x="44.800" y="7.500" width="2.400" height="7" fill="#3c3c40" transform="rotate(315 46 46)"/><rect x="44.800" y="7.500" width="2.400" height="7" fill="#3c3c40" transform="rotate(324 46 46)"/><rect x="44.800" y="7.500" width="2.400" height="7" fill="#3c3c40" transform="rotate(333 46 46)"/><rect x="44.800" y="7.500" width="2.400" height="7" fill="#3c3c40" transform="rotate(342 46 46)"/><rect x="44.800" y="7.500" width="2.400" height="7" fill="#3c3c40" transform="rotate(351 46 46)"/><circle cx="46" cy="46" r="30.500" fill="none" stroke="#3c3c40" stroke-width="4.500"/><circle cx="46" cy="46" r="24" fill="#8b8b90"/><circle cx="46" cy="46" r="24" fill="none" stroke="#4a4a4e" stroke-width="2"/><g stroke="#48484c" stroke-width="4" stroke-linecap="round"><path d="M46 46L46 20"/><path d="M46 46L68.500 59"/><path d="M46 46L23.500 59"/></g><circle cx="46" cy="46" r="5" fill="#48484c"/></g></svg><svg class="a" style="left:2064.0px;top:1610.0px;filter:drop-shadow(0 1.500px 2px rgba(0,0,0,.3));" width="106" height="106" viewBox="0 0 106 106"><defs><clipPath id="mtc"><circle cx="53" cy="53" r="49"/></clipPath></defs><circle cx="53" cy="53" r="52.500" fill="#fff"/><circle cx="53" cy="53" r="48.500" fill="#41a4e6"/><g clip-path="url(#mtc)"><rect x="0" y="72" width="106" height="40" fill="#4f9fdc"/><path d="M0 70H106" stroke="#fff" stroke-width="5"/><path d="M14 68L31 32L40 50" fill="none" stroke="#fff" stroke-width="4.800" stroke-linejoin="miter"/><path d="M37 68L61 16L87 68" fill="none" stroke="#fff" stroke-width="4.800" stroke-linejoin="miter"/></g></svg><svg class="a" style="left:2192.5px;top:1617.0px;filter:drop-shadow(0 1.500px 2px rgba(0,0,0,.3));" width="92" height="92" viewBox="0 0 92 92"><defs><linearGradient id="gp" x1="0" y1="0" x2="0" y2="1"><stop offset="0" stop-color="#12f53c"/><stop offset="1" stop-color="#0b8f1f"/></linearGradient><clipPath id="gpc"><path d="M26 0H91V60C91 80 78 92 58 92H22C9 92 0 83 0 70V26C0 10 10 0 26 0Z"/></clipPath></defs><g clip-path="url(#gpc)"><rect width="92" height="92" fill="url(#gp)"/><path d="M17 30L-5 52L-5 95L70 95L70 74L62 72Z" fill="#0a5a12" opacity=".85"/><path d="M17 30L62 72L70 74L92 95L40 95Z" fill="#0a6a16" opacity=".5"/><path d="M17 28C19 22 25 19 29 21L66 57L70 73L56 68L18 33Z" fill="#eaf5e6"/><path d="M66 57L70 73L56 68Z" fill="#f6f6f0"/><path d="M68.500 67L70 73L64.500 71Z" fill="#2a2a2a"/><path d="M29 21L66 57L61 63L23 26.500Z" fill="#ffffff"/></g></svg><div class="a" style="left:2326.7px;top:1614.8px;width:1.5px;height:107.0px;background:rgba(255,255,255,.42);"></div><svg class="a" style="left:2362.0px;top:1618.0px;filter:drop-shadow(0 1.500px 2px rgba(0,0,0,.3));" width="107" height="91" viewBox="0 0 107 91"><defs><linearGradient id="fd" x1="0" y1="0" x2="0" y2="1"><stop offset="0" stop-color="#5fcdfd"/><stop offset="1" stop-color="#4ab8f6"/></linearGradient></defs><path d="M0 8C0 3 3 0 8 0H27C31 0 33 1.500 35.500 4L39 7.500C40.500 9 42 9.500 44.500 9.500H98C103 9.500 106 12.500 106 17.500V30H0Z" fill="#2ea3e6"/><rect x="0" y="15.500" width="106" height="74.500" rx="6" fill="url(#fd)"/><path d="M0 20C0 17.500 2 15.500 5 15.500H101C104 15.500 106 17.500 106 20" fill="none" stroke="#8adcff" stroke-width="1.200"/><circle cx="53" cy="49" r="19.500" fill="#3a9ee4"/><path d="M53 38V59M44.500 51L53 59.500L61.500 51" fill="none" stroke="#5cc8fb" stroke-width="3.200" stroke-linecap="round" stroke-linejoin="round"/></svg><svg class="a" style="left:2494.0px;top:1612.0px;" width="84" height="104" viewBox="0 0 84 104"><defs><linearGradient id="tr" x1="0" y1="0" x2="1" y2="0"><stop offset="0" stop-color="#74747c"/><stop offset=".350" stop-color="#6c7076"/><stop offset=".700" stop-color="#5a5e64"/><stop offset="1" stop-color="#66646e"/></linearGradient></defs><path d="M1 10L13 94C14 100 26 103 42 103C58 103 70 100 71 94L83 10Z" fill="url(#tr)" opacity=".92"/><ellipse cx="42" cy="10" rx="41" ry="9.500" fill="#6a5d84"/><ellipse cx="42" cy="10" rx="41" ry="9.500" fill="none" stroke="#8c7f9c" stroke-width="1.600"/></svg><div class="a" style="left:166.0px;top:1727.5px;width:8.0px;height:8.0px;background:#c9a4f5;border-radius:50%;"></div><div class="a" style="left:408.0px;top:1727.5px;width:8.0px;height:8.0px;background:#c9a4f5;border-radius:50%;"></div><div class="a" style="left:2232.0px;top:1727.5px;width:8.0px;height:8.0px;background:#f08af0;border-radius:50%;"></div><div class="a" style="left:0;top:0;width:2706px;height:1750px;clip-path:inset(50px 154px 163px 152px round 20px);"><div class="a" style="left:152.0px;top:50.0px;width:2400.0px;height:141.0px;background:#3d373f;border-radius:20px 20px 0 0;box-shadow:inset 0 1.500px 0 rgba(255,255,255,.28);"></div><div class="a" style="left:152.0px;top:190.0px;width:2400.0px;height:2.0px;background:#141214;"></div><div class="a" style="left:167.8px;top:65.8px;width:24.4px;height:24.4px;background:#fe5f57;border-radius:50%;box-shadow:inset 0 0 0 1px #d8443c;"></div><div class="a" style="left:207.8px;top:65.8px;width:24.4px;height:24.4px;background:#febc2e;border-radius:50%;box-shadow:inset 0 0 0 1px #d79f1e;"></div><div class="a" style="left:247.8px;top:65.8px;width:24.4px;height:24.4px;background:#28c840;border-radius:50%;box-shadow:inset 0 0 0 1px #1ea632;"></div><span id="t17" class="t" style="top:64.1px;font-size:27px;color:#b9b2bd;font-weight:700;letter-spacing:0.61px;left:1285.0px;-webkit-text-stroke:.300px #b9b2bd;">Untitled-2</span><svg class="a" style="left:1424.0px;top:70.0px;" width="16" height="12" viewBox="0 0 16 12"><path d="M2 3.3L8 8.7L14 3.3" fill="none" stroke="#b9b2bd" stroke-width="2.6" stroke-linecap="round" stroke-linejoin="round"/></svg><div class="a" style="left:164.0px;top:110.0px;width:112.0px;height:36.0px;background:#7d7680;border-radius:9px;"></div><span id="t18" class="t" style="top:116.1px;font-size:27px;color:#fff;letter-spacing:0.48px;left:180.0px;-webkit-text-stroke:.300px #fff;">87%</span><svg class="a" style="left:250.5px;top:122.5px;" width="16" height="12" viewBox="0 0 16 12"><path d="M2 3.3L8 8.7L14 3.3" fill="none" stroke="#fff" stroke-width="2.6" stroke-linecap="round" stroke-linejoin="round"/></svg><div class="a" style="left:292.0px;top:110.0px;width:176.0px;height:36.0px;background:#7d7680;border-radius:9px;"></div><span id="t19" class="t" style="top:116.1px;font-size:27px;color:#fff;letter-spacing:-0.23px;left:307.5px;-webkit-text-stroke:.300px #fff;">Enhanced</span><svg class="a" style="left:442.5px;top:122.5px;" width="16" height="12" viewBox="0 0 16 12"><path d="M2 3.3L8 8.7L14 3.3" fill="none" stroke="#fff" stroke-width="2.6" stroke-linecap="round" stroke-linejoin="round"/></svg><span id="t20" class="t" style="top:159.6px;font-size:23px;color:#c9c4cc;letter-spacing:0.07px;left:220.0px;transform:translateX(-50%);-webkit-text-stroke:.300px #c9c4cc;">Zoom</span><span id="t21" class="t" style="top:159.6px;font-size:23px;color:#c9c4cc;letter-spacing:0.24px;left:379.6px;transform:translateX(-50%);-webkit-text-stroke:.300px #c9c4cc;">View Modes</span><span id="t22" class="t" style="top:159.6px;font-size:23px;color:#7f7983;letter-spacing:0.02px;left:555.5px;transform:translateX(-50%);-webkit-text-stroke:.300px #7f7983;">Group</span><span id="t23" class="t" style="top:159.6px;font-size:23px;color:#7f7983;letter-spacing:0.29px;left:679.6px;transform:translateX(-50%);-webkit-text-stroke:.300px #7f7983;">Ungroup</span><span id="t24" class="t" style="top:159.6px;font-size:23px;color:#7f7983;letter-spacing:0.14px;left:821.6px;transform:translateX(-50%);-webkit-text-stroke:.300px #7f7983;">Lock</span><span id="t25" class="t" style="top:159.6px;font-size:23px;color:#7f7983;letter-spacing:0.34px;left:945.2px;transform:translateX(-50%);-webkit-text-stroke:.300px #7f7983;">Unlock</span><span id="t26" class="t" style="top:159.6px;font-size:23px;color:#c9c4cc;letter-spacing:0.34px;left:1094.8px;transform:translateX(-50%);-webkit-text-stroke:.300px #c9c4cc;">Alignment</span><span id="t27" class="t" style="top:159.6px;font-size:23px;color:#c9c4cc;letter-spacing:0.59px;left:1296.3px;transform:translateX(-50%);-webkit-text-stroke:.300px #c9c4cc;">Mirror</span><span id="t28" class="t" style="top:159.6px;font-size:23px;color:#c9c4cc;letter-spacing:0.36px;left:1650.9px;transform:translateX(-50%);-webkit-text-stroke:.300px #c9c4cc;">Arrange</span><span id="t29" class="t" style="top:159.6px;font-size:23px;color:#c9c4cc;letter-spacing:0.19px;left:2057.6px;transform:translateX(-50%);-webkit-text-stroke:.300px #c9c4cc;">View</span><span id="t30" class="t" style="top:159.6px;font-size:23px;color:#c9c4cc;letter-spacing:0.17px;left:2303.1px;transform:translateX(-50%);-webkit-text-stroke:.300px #c9c4cc;">Snap To</span><svg class="a" style="left:538.0px;top:112.0px;" width="32" height="32" viewBox="0 0 32 32"><g fill="none" stroke="#77717b" stroke-width="2"><rect x="2" y="2.300" width="28" height="27.700"/><rect x="7" y="6.500" width="12.800" height="13" fill="#5d5763"/><path d="M19.800 13.200H25V25.800H12.500V19.500"/></g><circle cx="2" cy="2.3" r="2" fill="#77717b"/><circle cx="30" cy="2.3" r="2" fill="#77717b"/><circle cx="2" cy="30" r="2" fill="#77717b"/><circle cx="30" cy="30" r="2" fill="#77717b"/></svg><svg class="a" style="left:662.0px;top:112.0px;" width="32" height="32" viewBox="0 0 32 32"><g fill="none" stroke="#77717b" stroke-width="2"><rect x="1.700" y="2.300" width="18.500" height="17.600" fill="#5d5763"/><path d="M20.200 13.200H29.400V28.900H12.200V19.900"/></g><circle cx="1.7" cy="2.3" r="2" fill="#77717b"/><circle cx="20.2" cy="2.3" r="2" fill="#77717b"/><circle cx="1.7" cy="19.9" r="2" fill="#77717b"/><circle cx="20.2" cy="19.9" r="2" fill="#77717b"/><circle cx="29.4" cy="13.2" r="2" fill="#77717b"/><circle cx="29.4" cy="28.9" r="2" fill="#77717b"/><circle cx="12.2" cy="28.9" r="2" fill="#77717b"/></svg><svg class="a" style="left:806.0px;top:110.0px;" width="28" height="36" viewBox="0 0 28 36"><g fill="none" stroke="#77717b" stroke-width="2.200"><path d="M9 19.400V12.500a5.200 5.200 0 0 1 10.400 0V19.400"/><rect x="4.700" y="19.400" width="18.900" height="12" fill="#5d5763"/></g></svg><svg class="a" style="left:929.0px;top:110.0px;" width="28" height="36" viewBox="0 0 28 36"><g fill="none" stroke="#77717b" stroke-width="2.200"><path d="M8.700 19.400V12a6.200 6.200 0 0 1 12.400 -0.500"/><rect x="5.100" y="19.400" width="19.300" height="12"/><path d="M5.100 24.600H24.400" stroke-width="1.600"/></g></svg><div class="a" style="left:1051.0px;top:110.0px;width:88.0px;height:36.0px;background:#7d7680;border-radius:9px;"></div><svg class="a" style="left:1066.0px;top:113.0px;" width="40" height="30" viewBox="0 0 40 30"><g fill="none" stroke="#e8e4ea" stroke-width="2.400"><path d="M4 1v28"/><rect x="9" y="5" width="20" height="7"/><rect x="9" y="17" width="12" height="7"/></g></svg><svg class="a" style="left:1113.5px;top:122.5px;" width="16" height="12" viewBox="0 0 16 12"><path d="M2 3.3L8 8.7L14 3.3" fill="none" stroke="#fff" stroke-width="2.6" stroke-linecap="round" stroke-linejoin="round"/></svg><svg class="a" style="left:1224.0px;top:113.0px;" width="34" height="30" viewBox="0 0 34 30"><g fill="none" stroke="#77717b" stroke-width="2"><path d="M17 0.500v28.500"/><path d="M2.300 5.500H7.900V16H13.800V22.300H2.300z"/><path d="M31.600 5.500H26V16H20.100V22.300H31.600z" fill="#5d5763"/></g></svg><div class="a" style="left:1294.5px;top:113.0px;width:1.5px;height:30.0px;background:#4e4852;"></div><svg class="a" style="left:1329.0px;top:113.0px;" width="34" height="30" viewBox="0 0 34 30"><g fill="none" stroke="#77717b" stroke-width="2"><path d="M3.300 13.900H30.500"/><path d="M9.600 0.500H26.400V5.500H15.400V10.100H9.600z"/><path d="M9.600 18.100H15.400V22.700H26.400V28.100H9.600z" fill="#5d5763"/></g></svg><svg class="a" style="left:1474.0px;top:113.0px;" width="30" height="30" viewBox="0 0 30 30"><g fill="none" stroke="#77717b" stroke-width="2"><rect x="14.6" y="13" width="15" height="15" fill="#3d373f"/><rect x="8.7" y="8" width="14.6" height="14.6" fill="#3d373f"/><rect x="2" y="1.3" width="16" height="16" fill="#5d5763"/></g></svg><svg class="a" style="left:1580.6px;top:113.0px;" width="30" height="30" viewBox="0 0 30 30"><g fill="none" stroke="#77717b" stroke-width="2"><rect x="12.1" y="11.9" width="16.8" height="16.8" fill="#3d373f"/><rect x="1.6" y="1.3" width="17.1" height="17.1" fill="#5d5763"/></g></svg><svg class="a" style="left:1686.0px;top:113.0px;" width="30" height="30" viewBox="0 0 30 30"><g fill="none" stroke="#77717b" stroke-width="2"><rect x="12.5" y="11.9" width="17" height="17" fill="#5d5763"/><rect x="2.4" y="1.3" width="16.8" height="16.8" fill="#3d373f"/></g></svg><svg class="a" style="left:1792.5px;top:113.0px;" width="30" height="30" viewBox="0 0 30 30"><g fill="none" stroke="#77717b" stroke-width="2"><rect x="14.3" y="13" width="14.6" height="14.6" fill="#5d5763"/><rect x="8.1" y="8" width="14.6" height="14.6" fill="#3d373f"/><rect x="1.7" y="1.3" width="15.5" height="15.5" fill="#3d373f"/></g></svg><div class="a" style="left:1541.3px;top:113.0px;width:1.5px;height:30.0px;background:#4e4852;"></div><div class="a" style="left:1647.8px;top:113.0px;width:1.5px;height:30.0px;background:#4e4852;"></div><div class="a" style="left:1754.0px;top:113.0px;width:1.5px;height:30.0px;background:#4e4852;"></div><div class="a" style="left:2001.7px;top:113.0px;width:1.5px;height:30.0px;background:#4e4852;"></div><div class="a" style="left:2108.0px;top:113.0px;width:1.5px;height:30.0px;background:#4e4852;"></div><svg class="a" style="left:1934.0px;top:112.0px;" width="32" height="32" viewBox="0 0 32 32"><g fill="none" stroke="#d9d5dc" stroke-width="2.200"><path d="M2 30V3h28v8H10v19z"/><path d="M8 3v4M14 3v4M20 3v4M26 3v4M2 16h4M2 22h4"/></g></svg><svg class="a" style="left:2040.0px;top:112.0px;" width="32" height="32" viewBox="0 0 32 32"><g fill="none" stroke="#d9d5dc" stroke-width="2.200" stroke-dasharray="2.600 1.300"><rect x="2" y="2" width="28" height="28"/><path d="M11.300 2v28M20.700 2v28M2 11.300h28M2 20.700h28"/></g></svg><svg class="a" style="left:2145.0px;top:112.0px;" width="32" height="32" viewBox="0 0 32 32"><g fill="none" stroke="#2f7df6" stroke-width="2.400"><rect x="2.700" y="2" width="28" height="28"/><path d="M12.700 2v28M2.700 12.400h28" stroke-dasharray="2.400 2.200"/></g></svg><div class="a" style="left:2259.0px;top:110.0px;width:88.0px;height:36.0px;background:#7d7680;border-radius:9px;"></div><svg class="a" style="left:2276.0px;top:113.0px;" width="30" height="30" viewBox="0 0 30 30"><g fill="none" stroke="#e8e4ea" stroke-width="2" stroke-linejoin="round"><path d="M1.500 1.500V15a13.500 13.500 0 0 0 27 0V1.500h-6.500V15a7 7 0 0 1-14 0V1.500z"/><path d="M1.500 8.500h6.500M22 8.500h6.500"/></g></svg><svg class="a" style="left:2321.5px;top:122.5px;" width="16" height="12" viewBox="0 0 16 12"><path d="M2 3.3L8 8.7L14 3.3" fill="none" stroke="#fff" stroke-width="2.6" stroke-linecap="round" stroke-linejoin="round"/></svg><svg class="a" style="left:2512.0px;top:117.0px;" width="26" height="22" viewBox="0 0 26 22"><g fill="none" stroke="#d9d5dc" stroke-width="2.400" stroke-linecap="round" stroke-linejoin="round"><path d="M2 1.500l9.500 9.500l-9.500 9.500"/><path d="M13 1.500l9.500 9.500l-9.500 9.500"/></g></svg><div class="a" style="left:152.0px;top:192.0px;width:2400.0px;height:96.0px;background:#383838;"></div><div class="a" style="left:152.0px;top:287.5px;width:2400.0px;height:2.0px;background:#454545;"></div><div class="a" style="left:490.8px;top:192.0px;width:1.5px;height:95.0px;background:#444444;"></div><div class="a" style="left:748.3px;top:192.0px;width:1.5px;height:95.0px;background:#444444;"></div><div class="a" style="left:839.3px;top:192.0px;width:1.5px;height:95.0px;background:#444444;"></div><div class="a" style="left:966.9px;top:192.0px;width:1.5px;height:95.0px;background:#444444;"></div><div class="a" style="left:1093.3px;top:192.0px;width:1.5px;height:95.0px;background:#444444;"></div><div class="a" style="left:1393.8px;top:192.0px;width:1.5px;height:95.0px;background:#444444;"></div><div class="a" style="left:1623.9px;top:192.0px;width:1.5px;height:95.0px;background:#444444;"></div><div class="a" style="left:1880.7px;top:192.0px;width:1.5px;height:95.0px;background:#444444;"></div><div class="a" style="left:166.0px;top:219.0px;width:315.0px;height:40.0px;background:#434343;border-radius:10px;border:1.500px solid #585858;"></div><span id="t31" class="t" style="top:226.8px;font-size:25px;color:#f0f0f0;letter-spacing:-0.03px;left:172.5px;">Custom</span><div class="a" style="left:445.5px;top:223.0px;width:32.5px;height:32.0px;background:#1a66e8;border-radius:7px;"></div><svg class="a" style="left:453.7px;top:233.5px;" width="16" height="12" viewBox="0 0 16 12"><path d="M2 3.3L8 8.7L14 3.3" fill="none" stroke="#fff" stroke-width="2.8" stroke-linecap="round" stroke-linejoin="round"/></svg><svg class="a" style="left:506.0px;top:206.0px;" width="24" height="24" viewBox="0 0 24 24"><g fill="none" stroke="#c8c8c8" stroke-width="2"><path d="M2 4h20M2 1v6M22 1v6"/><rect x="6" y="11" width="11" height="10"/></g></svg><svg class="a" style="left:506.0px;top:248.0px;" width="24" height="26" viewBox="0 0 24 26"><g fill="none" stroke="#c8c8c8" stroke-width="2"><path d="M4 2v22M1 2h6M1 24h6"/><rect x="11" y="7" width="11" height="10"/></g></svg><div class="a" style="left:547.8px;top:204.0px;width:163.0px;height:35.0px;background:#424242;border:1.500px solid #5c5c5c;"></div><span id="t32" class="t" style="top:210.3px;font-size:24px;color:#efefef;letter-spacing:0.22px;left:554.8px;">1200.0</span><div class="a" style="left:547.8px;top:238.5px;width:163.0px;height:35.0px;background:#424242;border:1.500px solid #5c5c5c;"></div><span id="t33" class="t" style="top:244.8px;font-size:24px;color:#efefef;letter-spacing:-0.12px;left:554.8px;">1100.0</span><div class="a" style="left:714.5px;top:203.3px;width:25.5px;height:36.0px;background:#5f5f5f;border-radius:9px;"></div><svg class="a" style="left:719.2px;top:208.0px;" width="16" height="10" viewBox="0 0 16 10"><path d="M2 8L8 2L14 8" fill="none" stroke="#e6e6e6" stroke-width="2.400" stroke-linecap="round" stroke-linejoin="round"/></svg><svg class="a" style="left:719.2px;top:224.6px;" width="16" height="10" viewBox="0 0 16 10"><path d="M2 2L8 8L14 2" fill="none" stroke="#e6e6e6" stroke-width="2.400" stroke-linecap="round" stroke-linejoin="round"/></svg><div class="a" style="left:714.5px;top:239.3px;width:25.5px;height:36.0px;background:#5f5f5f;border-radius:9px;"></div><svg class="a" style="left:719.2px;top:244.0px;" width="16" height="10" viewBox="0 0 16 10"><path d="M2 8L8 2L14 8" fill="none" stroke="#e6e6e6" stroke-width="2.400" stroke-linecap="round" stroke-linejoin="round"/></svg><svg class="a" style="left:719.2px;top:260.6px;" width="16" height="10" viewBox="0 0 16 10"><path d="M2 2L8 8L14 2" fill="none" stroke="#e6e6e6" stroke-width="2.400" stroke-linecap="round" stroke-linejoin="round"/></svg><div class="a" style="left:759.7px;top:218.7px;width:71.5px;height:40.5px;background:#5f5f5f;border-radius:7px;"></div><svg class="a" style="left:770.0px;top:222.0px;" width="34" height="34" viewBox="0 0 34 34"><g fill="none" stroke="#c8c8c8" stroke-width="2"><path d="M10 21V8h7l4 4v9z"/><path d="M3 31l7-7M10 29v-5h-5"/><path d="M30 3l-7 7M23 5v5h5"/></g><circle cx="16" cy="16" r="3" fill="#c8c8c8"/></svg><svg class="a" style="left:808.5px;top:234.0px;" width="15.0" height="11.0" viewBox="0 0 15.0 11.0"><path d="M2 3.0L7.5 8.0L13.0 3.0" fill="none" stroke="#9a9a9a" stroke-width="2.4" stroke-linecap="round" stroke-linejoin="round"/></svg><div class="a" style="left:850.6px;top:217.0px;width:108.5px;height:43.0px;background:#222;border-radius:7px;border:1.500px solid #1a1a1a;"></div><div class="a" style="left:851.6px;top:218.5px;width:52.0px;height:40.0px;background:#5c5c5c;border-radius:6px 0 0 6px;"></div><svg class="a" style="left:868.0px;top:225.0px;" width="18" height="28" viewBox="0 0 18 28"><rect x="1.500" y="1.500" width="15" height="25" fill="none" stroke="#c8c8c8" stroke-width="2"/></svg><svg class="a" style="left:919.0px;top:230.0px;" width="26" height="18" viewBox="0 0 26 18"><rect x="1.500" y="1.500" width="23" height="14" fill="none" stroke="#c8c8c8" stroke-width="2"/></svg><div class="a" style="left:976.0px;top:217.0px;width:109.0px;height:43.0px;background:#222;border-radius:7px;border:1.500px solid #1a1a1a;"></div><div class="a" style="left:1031.0px;top:218.5px;width:53.0px;height:40.0px;background:#5c5c5c;border-radius:0 6px 6px 0;"></div><svg class="a" style="left:988.0px;top:223.0px;" width="32" height="32" viewBox="0 0 32 32"><g fill="none" stroke="#c8c8c8" stroke-width="2"><path d="M8 15H2V3h11v5"/><path d="M14 20H9V8h11v4"/><rect x="18" y="14" width="11" height="14" fill="#222"/></g></svg><svg class="a" style="left:1041.0px;top:222.0px;" width="34" height="34" viewBox="0 0 34 34"><g fill="none" stroke="#c8c8c8" stroke-width="2"><path d="M13 32V5h10v27"/><path d="M13 18H5v14h8"/><rect x="21" y="18" width="10" height="14" fill="#5c5c5c"/></g></svg><span id="t34" class="t" style="top:226.8px;font-size:25px;color:#e6e6e6;letter-spacing:0.02px;left:1108.0px;">Units:</span><div class="a" style="left:1183.0px;top:218.7px;width:202.5px;height:40.5px;background:#5f5f5f;border-radius:9px;"></div><span id="t35" class="t" style="top:226.8px;font-size:25px;color:#f0f0f0;letter-spacing:0.82px;left:1199.0px;">pixels</span><svg class="a" style="left:1356.0px;top:224.0px;" width="18" height="30" viewBox="0 0 18 30"><g fill="none" stroke="#f0f0f0" stroke-width="2.600" stroke-linecap="round" stroke-linejoin="round"><path d="M3 11l6-6l6 6"/><path d="M3 19l6 6l6-6"/></g></svg><svg class="a" style="left:1409.0px;top:224.0px;" width="30" height="30" viewBox="0 0 30 30"><g fill="none" stroke="#c8c8c8" stroke-width="2"><rect x="10" y="10" width="10" height="10"/><path d="M15 2l4 5h-8zM15 28l4-5h-8zM2 15l5-4v8zM28 15l-5-4v8z" fill="#c8c8c8" stroke="none"/></g></svg><div class="a" style="left:1458.0px;top:221.6px;width:128.0px;height:33.0px;background:#424242;border:1.500px solid #5c5c5c;"></div><span id="t36" class="t" style="top:226.8px;font-size:24px;color:#efefef;letter-spacing:-0.28px;left:1464.0px;">1.0 px</span><div class="a" style="left:1590.5px;top:217.6px;width:25.0px;height:41.5px;background:#5f5f5f;border-radius:9px;"></div><svg class="a" style="left:1595.0px;top:223.8px;" width="16" height="10" viewBox="0 0 16 10"><path d="M2 8L8 2L14 8" fill="none" stroke="#e6e6e6" stroke-width="2.400" stroke-linecap="round" stroke-linejoin="round"/></svg><svg class="a" style="left:1595.0px;top:242.9px;" width="16" height="10" viewBox="0 0 16 10"><path d="M2 2L8 8L14 2" fill="none" stroke="#e6e6e6" stroke-width="2.400" stroke-linecap="round" stroke-linejoin="round"/></svg><svg class="a" style="left:1637.0px;top:204.0px;" width="30" height="28" viewBox="0 0 30 28"><g fill="none" stroke="#c8c8c8" stroke-width="2"><rect x="2" y="8" width="10" height="10"/><rect x="8" y="14" width="10" height="10" fill="#383838"/></g></svg><span id="t37" class="t" style="top:200.6px;font-size:13px;color:#c8c8c8;font-weight:700;left:1662.0px;">x</span><svg class="a" style="left:1637.0px;top:246.0px;" width="30" height="28" viewBox="0 0 30 28"><g fill="none" stroke="#c8c8c8" stroke-width="2"><rect x="2" y="8" width="10" height="10"/><rect x="8" y="14" width="10" height="10" fill="#383838"/></g></svg><span id="t38" class="t" style="top:243.1px;font-size:12px;color:#c8c8c8;font-weight:700;left:1662.0px;">Y</span><div class="a" style="left:1679.7px;top:204.0px;width:162.0px;height:35.0px;background:#424242;border:1.500px solid #5c5c5c;"></div><span id="t39" class="t" style="top:210.3px;font-size:24px;color:#efefef;letter-spacing:0.43px;left:1686.7px;">24.0</span><div class="a" style="left:1679.7px;top:238.5px;width:162.0px;height:35.0px;background:#424242;border:1.500px solid #5c5c5c;"></div><span id="t40" class="t" style="top:244.8px;font-size:24px;color:#efefef;letter-spacing:0.43px;left:1686.7px;">24.0</span><div class="a" style="left:1846.0px;top:203.3px;width:25.5px;height:36.0px;background:#5f5f5f;border-radius:9px;"></div><svg class="a" style="left:1850.8px;top:208.0px;" width="16" height="10" viewBox="0 0 16 10"><path d="M2 8L8 2L14 8" fill="none" stroke="#e6e6e6" stroke-width="2.400" stroke-linecap="round" stroke-linejoin="round"/></svg><svg class="a" style="left:1850.8px;top:224.6px;" width="16" height="10" viewBox="0 0 16 10"><path d="M2 2L8 8L14 2" fill="none" stroke="#e6e6e6" stroke-width="2.400" stroke-linecap="round" stroke-linejoin="round"/></svg><div class="a" style="left:1846.0px;top:239.3px;width:25.5px;height:36.0px;background:#5f5f5f;border-radius:9px;"></div><svg class="a" style="left:1850.8px;top:244.0px;" width="16" height="10" viewBox="0 0 16 10"><path d="M2 8L8 2L14 8" fill="none" stroke="#e6e6e6" stroke-width="2.400" stroke-linecap="round" stroke-linejoin="round"/></svg><svg class="a" style="left:1850.8px;top:260.6px;" width="16" height="10" viewBox="0 0 16 10"><path d="M2 2L8 8L14 2" fill="none" stroke="#e6e6e6" stroke-width="2.400" stroke-linecap="round" stroke-linejoin="round"/></svg><div class="a" style="left:1890.0px;top:217.0px;width:56.5px;height:43.0px;background:#1e1e1e;border-radius:6px;border:2px solid #0c0c0c;"></div><svg class="a" style="left:1902.0px;top:224.0px;" width="32" height="30" viewBox="0 0 32 30"><g fill="none" stroke="#e0e0e0" stroke-width="2.200"><rect x="5" y="5" width="20" height="20"/><path d="M1 5h8M5 1v8M21 5h8M25 1v8M1 25h8M5 21v8"/></g><path d="M19 14l9 8h-4.500l2 4.500-2.500 1-2-4.500-2.500 2.500z" fill="#e0e0e0" stroke="#1e1e1e" stroke-width="1"/></svg><div class="a" style="left:219.5px;top:289.5px;width:1599.0px;height:1213.5px;background:#5c5c5c;"></div><div class="a" style="left:1818.0px;top:288.0px;width:31.0px;height:1215.0px;background:#767676;"></div><div class="a" style="left:1826.0px;top:558.0px;width:16.0px;height:674.5px;background:#c2c2c2;border-radius:8px;"></div><div class="a" style="left:220.5px;top:1502.5px;width:1598.0px;height:30.0px;background:#747474;"></div><div class="a" style="left:491.5px;top:1509.7px;width:1056.0px;height:16.0px;background:#c2c2c2;border-radius:8px;"></div><div class="a" style="left:1818.5px;top:1502.5px;width:30.5px;height:30.0px;background:#3a3a3a;"></div><svg class="a" style="left:1822.0px;top:1506.0px;" width="22" height="22" viewBox="0 0 22 22"><g fill="none" stroke="#d8d8d8" stroke-width="1.800" stroke-linecap="round"><circle cx="9.500" cy="9.500" r="7.500"/><path d="M15 15l5.500 5.500" stroke-width="2.400"/><path d="M9.500 5.500v8M5.500 9.500h8" stroke-width="1.400"/></g></svg><div class="a" style="left:220.5px;top:1532.5px;width:1628.5px;height:54.5px;background:#383838;"></div><div class="a" style="left:648.3px;top:1532.5px;width:200.0px;height:54.5px;background:#262626;"></div><svg class="a" style="left:236.0px;top:1548.0px;" width="22" height="22" viewBox="0 0 22 22"><path d="M11 2v18M2 11h18" stroke="#dcdcdc" stroke-width="2.600" fill="none"/></svg><svg class="a" style="left:608.3px;top:1548.0px;" width="22" height="22" viewBox="0 0 22 22"><path d="M11 2v18M2 11h18" stroke="#dcdcdc" stroke-width="2.600" fill="none"/></svg><svg class="a" style="left:294.0px;top:1551.0px;" width="16" height="16" viewBox="0 0 16 16"><path d="M2 2v12" stroke="#5a5a5a" stroke-width="2.400"/><path d="M15 2L6 8l9 6z" fill="#5a5a5a"/></svg><svg class="a" style="left:556.0px;top:1551.0px;" width="16" height="16" viewBox="0 0 16 16"><path d="M14 2v12" stroke="#5a5a5a" stroke-width="2.400"/><path d="M1 2l9 6l-9 6z" fill="#5a5a5a"/></svg><svg class="a" style="left:350.0px;top:1551.0px;" width="12" height="16" viewBox="0 0 12 16"><path d="M9 2L3 8l6 6" stroke="#5a5a5a" stroke-width="2.400" fill="none" stroke-linecap="round" stroke-linejoin="round"/></svg><svg class="a" style="left:504.0px;top:1551.0px;" width="12" height="16" viewBox="0 0 12 16"><path d="M3 2l6 6l-6 6" stroke="#5a5a5a" stroke-width="2.400" fill="none" stroke-linecap="round" stroke-linejoin="round"/></svg><span id="t41" class="t" style="top:1548.3px;font-size:24px;color:#cfcfcf;letter-spacing:0.09px;left:434.0px;transform:translateX(-50%);">1&nbsp;&nbsp;of&nbsp;&nbsp;1</span><span id="t42" class="t" style="top:1549.3px;font-size:23px;color:#e6e6e6;letter-spacing:-0.78px;left:747.9px;transform:translateX(-50%);">Page 1</span><div class="a" style="left:499.5px;top:419.7px;width:1039.5px;height:952.8px;background:#e6e6e6;"></div><div class="a" style="left:874.7px;top:419.7px;width:664.3px;height:651.5px;background:#fff;"></div><div class="a" style="left:873.2px;top:419.7px;width:1.5px;height:651.5px;background:#f2f2f2;"></div><div class="a" style="left:507.0px;top:1078.5px;width:511.5px;height:286.5px;background:#fff;box-shadow:0 0 0 1.500px #f3f3f3;"></div><div class="a" style="left:1022.0px;top:1078.5px;width:511.7px;height:286.5px;background:#fff;box-shadow:0 0 0 1.500px #f3f3f3;"></div><div class="a" style="left:526.4px;top:489.4px;width:320.6px;height:572.0px;border:1.600px dashed #1c1c1c;"></div><span id="t43" class="t" style="top:442.1px;font-size:28.5px;color:#0a0a0a;font-weight:700;letter-spacing:-1.72px;left:528.8px;word-spacing:3px;-webkit-text-stroke:.400px #0a0a0a;">Give it a Try</span><span id="t44" class="t" style="top:492.7px;font-size:15px;color:#111;font-weight:700;letter-spacing:-0.08px;left:571.9px;">Adding drop shadows</span><span id="t45" class="t" style="top:512.0px;font-size:15px;color:#111;font-weight:700;letter-spacing:0.20px;left:571.9px;">Drop shadow tool</span><span id="t46" class="t" style="top:796.0px;font-size:15px;color:#111;font-weight:700;letter-spacing:-0.16px;left:571.9px;">Adding block shadows</span><span id="t47" class="t" style="top:815.3px;font-size:15px;color:#111;font-weight:700;letter-spacing:-0.03px;left:571.9px;">Block shadow tool</span><span id="t48" class="t" style="top:548.1px;font-size:13.4px;color:#161616;letter-spacing:-0.35px;left:526.4px;">To add a drop shadow, click the object, and then drag</span><span id="t49" class="t" style="top:564.3px;font-size:13.4px;color:#161616;letter-spacing:-0.16px;left:526.4px;">from the first object to where you want to place the</span><span id="t50" class="t" style="top:581.1px;font-size:13.4px;color:#161616;letter-spacing:-0.61px;left:526.4px;">shadow.</span><span id="t51" class="t" style="top:614.1px;font-size:13.4px;color:#161616;letter-spacing:-0.37px;left:567.0px;">To change the perspective of the drop shadow,</span><span id="t52" class="t" style="top:631.1px;font-size:13.4px;color:#161616;letter-spacing:-0.43px;left:567.0px;">drag the start handle.</span><span id="t53" class="t" style="top:647.1px;font-size:13.4px;color:#161616;letter-spacing:-0.32px;left:567.0px;">To change the direction of the drop shadow, drag</span><span id="t54" class="t" style="top:664.1px;font-size:13.4px;color:#161616;letter-spacing:-0.50px;left:567.0px;">the end handle.</span><span id="t55" class="t" style="top:680.1px;font-size:13.4px;color:#161616;letter-spacing:-0.31px;left:567.0px;">To adjust the opacity of the drop shadow, move</span><span id="t56" class="t" style="top:697.1px;font-size:13.4px;color:#161616;letter-spacing:-0.41px;left:567.0px;">the slider.</span><span id="t57" class="t" style="top:712.9px;font-size:13.4px;color:#161616;letter-spacing:-0.37px;left:567.0px;">To change the color of the drop shadow, drag a</span><span id="t58" class="t" style="top:730.1px;font-size:13.4px;color:#161616;letter-spacing:-0.19px;left:567.0px;">color from the color palette to the end handle.</span><span id="t59" class="t" style="top:851.4px;font-size:13.4px;color:#161616;letter-spacing:-0.39px;left:526.4px;">Unlike drop shadows, block shadows consist of simple</span><span id="t60" class="t" style="top:868.3px;font-size:13.4px;color:#161616;letter-spacing:-0.38px;left:526.4px;">lines, which makes them ideal for screen printing and</span><span id="t61" class="t" style="top:884.5px;font-size:13.4px;color:#161616;letter-spacing:-0.68px;left:526.4px;">sign making.</span><span id="t62" class="t" style="top:916.6px;font-size:13.4px;color:#161616;letter-spacing:-0.37px;left:526.4px;">To add a block shadow, click the object, and drag in the</span><span id="t63" class="t" style="top:933.9px;font-size:13.4px;color:#161616;letter-spacing:-0.28px;left:526.4px;">direction you want until the block shadow is the size you</span><span id="t64" class="t" style="top:950.1px;font-size:13.4px;color:#161616;letter-spacing:-0.35px;left:526.4px;">want.</span><span id="t65" class="t" style="top:983.1px;font-size:13.4px;color:#161616;letter-spacing:-0.30px;left:567.0px;">To change the direction and depth of the block</span><span id="t66" class="t" style="top:1000.0px;font-size:13.4px;color:#161616;letter-spacing:-0.44px;left:567.0px;">shadow, drag the vector handles.</span><span id="t67" class="t" style="top:1016.1px;font-size:13.4px;color:#161616;letter-spacing:-0.39px;left:567.0px;">To change the color of the block shadow, drag a</span><span id="t68" class="t" style="top:1033.0px;font-size:13.4px;color:#161616;letter-spacing:-0.19px;left:567.0px;">color from the color palette to the end handle.</span><div class="a" style="left:550.3px;top:620.0px;width:3.0px;height:3.0px;background:#222;border-radius:50%;"></div><div class="a" style="left:550.3px;top:653.0px;width:3.0px;height:3.0px;background:#222;border-radius:50%;"></div><div class="a" style="left:550.3px;top:686.0px;width:3.0px;height:3.0px;background:#222;border-radius:50%;"></div><div class="a" style="left:550.3px;top:718.8px;width:3.0px;height:3.0px;background:#222;border-radius:50%;"></div><div class="a" style="left:550.3px;top:989.0px;width:3.0px;height:3.0px;background:#222;border-radius:50%;"></div><div class="a" style="left:550.3px;top:1022.0px;width:3.0px;height:3.0px;background:#222;border-radius:50%;"></div><svg class="a" style="left:0.0px;top:0.0px;pointer-events:none;" width="2706" height="1750" viewBox="0 0 2706 1750"><rect x="527.6" y="490" width="37.5" height="37.5" fill="#fff" stroke="#c2c2c2" stroke-width="2.43"/><defs><linearGradient id="dg527" x1="0" y1="0" x2="1" y2="1"><stop offset="0" stop-color="#555"/><stop offset="1" stop-color="#ddd"/></linearGradient></defs><rect x="539.8" y="502.2" width="18.2" height="18.2" fill="url(#dg527)"/><rect x="534.7" y="497.1" width="17.2" height="17.2" fill="#fff" stroke="#555" stroke-width="2.03"/><rect x="527.6" y="794.7" width="37.5" height="37.5" fill="#fff" stroke="#c2c2c2" stroke-width="2.43"/><polygon points="540.8,803.8 554.0,803.8 558.0,807.9 558.0,814.0 555.0,814.0 555.0,824.1 544.8,824.1 540.8,820.0" fill="#666"/><polygon points="535.7,802.8 552.9,802.8 552.9,809.9 547.9,809.9 547.9,820.0 540.8,820.0 540.8,809.9 535.7,809.9" fill="#fff" stroke="#555" stroke-width="2.03"/><rect x="511.5" y="1084.3" width="51.3" height="51.3" fill="#fff" stroke="#c2c2c2" stroke-width="3.33"/><defs><linearGradient id="dg511" x1="0" y1="0" x2="1" y2="1"><stop offset="0" stop-color="#555"/><stop offset="1" stop-color="#ddd"/></linearGradient></defs><rect x="528.1" y="1100.9" width="25.0" height="25.0" fill="url(#dg511)"/><rect x="521.2" y="1094.0" width="23.6" height="23.6" fill="#fff" stroke="#555" stroke-width="2.77"/><rect x="1030" y="1084.3" width="51.3" height="51.3" fill="#fff" stroke="#c2c2c2" stroke-width="3.33"/><polygon points="1048.0,1096.8 1066.0,1096.8 1071.6,1102.3 1071.6,1110.6 1067.4,1110.6 1067.4,1124.5 1053.6,1124.5 1048.0,1119.0" fill="#666"/><polygon points="1041.1,1095.4 1064.7,1095.4 1064.7,1105.1 1057.7,1105.1 1057.7,1119.0 1048.0,1119.0 1048.0,1105.1 1041.1,1105.1" fill="#fff" stroke="#555" stroke-width="2.77"/><g transform="translate(967.2 504.9) scale(1.0000)"><g fill="#000" stroke="#000" stroke-width="22" stroke-linejoin="round"><path d="M22.3 137.6L173 137.6L164.3 214Q163 226 152 226L44 226Q32.5 226 31 214Z"/><path d="M24.9 93C17 100 10.9 109 10.9 118.3C10.9 128 16 134 22.3 137.6L24.5 165.3A5.45 5.7 0 0 0 35.4 165.3L35.4 146A5.7 5.7 0 0 1 46.8 146L46.8 159.9A6.6 6.6 0 0 0 60 159.9L60 142.4A6.5 6.5 0 0 1 73 142.4L73 168.7A6.65 6.65 0 0 0 86.3 168.7L86.3 137.1A6.55 6.55 0 0 1 99.4 137.1L99.4 152.5A6.15 6.15 0 0 0 111.7 152.5L111.7 145.5A6.15 6.15 0 0 1 124 145.5L124 176.7A6.5 6.5 0 0 0 137 176.7L137 146.5A6.2 6.2 0 0 1 149.4 146.5L149.4 175.3A7 7 0 0 0 163.4 175.3L163.4 150C163.4 143 168 139 173 137.6C180 134 184.4 128 184.4 120C184.4 109 177 99 169 91Z"/><path d="M90.6 11.4C100 12 112 17 123 25.4C136 35 148 50 156.4 62.2C162 71 166 80 169 91C167 98 161 102 156 102C151 102 146.5 101 143.8 99.5C141 110 131 117 120.4 117C110 117 100 110 97.7 100.8C95 110 87 116.6 78.4 116.6C69 116.6 60.5 108 58.2 97.3C55 101 48 102.5 40.7 102.2C33 102 27 98 24.9 93C22.5 88 22.5 84 23.5 79.8C25 73 28 68 32 64C38 58 45 54 53 50C61 46 68 43 74 37.7C80 33 84.5 28 86.300 23.7C88 19.5 89.5 15 90.6 11.4Z"/></g><path d="M86.3 23.7C88 19.5 89.5 15 90.6 11.4C100 12 106 14 112 17.5" fill="none" stroke="#000" stroke-width="22" stroke-linejoin="miter" stroke-miterlimit="4"/><g stroke="#1a0f08" stroke-width="1.5" stroke-linejoin="round"><path d="M22.3 137.6L173 137.6L164.3 214Q163 226 152 226L44 226Q32.5 226 31 214Z" fill="#c28f69"/><rect x="84" y="126" width="18" height="14" fill="#c28f69" stroke="none"/><path d="M24.9 93C17 100 10.9 109 10.9 118.3C10.9 128 16 134 22.3 137.6L24.5 165.3A5.45 5.7 0 0 0 35.4 165.3L35.4 146A5.7 5.7 0 0 1 46.8 146L46.8 159.9A6.6 6.6 0 0 0 60 159.9L60 142.4A6.5 6.5 0 0 1 73 142.4L73 168.7A6.65 6.65 0 0 0 86.3 168.7L86.3 137.1A6.55 6.55 0 0 1 99.4 137.1L99.4 152.5A6.15 6.15 0 0 0 111.7 152.5L111.7 145.5A6.15 6.15 0 0 1 124 145.5L124 176.7A6.5 6.5 0 0 0 137 176.7L137 146.5A6.2 6.2 0 0 1 149.4 146.5L149.4 175.3A7 7 0 0 0 163.4 175.3L163.4 150C163.4 143 168 139 173 137.6C180 134 184.4 128 184.4 120C184.4 109 177 99 169 91Z" fill="#ffe2a6"/><path d="M90.6 11.4C100 12 112 17 123 25.4C136 35 148 50 156.4 62.2C162 71 166 80 169 91C167 98 161 102 156 102C151 102 146.5 101 143.8 99.5C141 110 131 117 120.4 117C110 117 100 110 97.7 100.8C95 110 87 116.6 78.4 116.6C69 116.6 60.5 108 58.2 97.3C55 101 48 102.5 40.7 102.2C33 102 27 98 24.9 93C22.5 88 22.5 84 23.5 79.8C25 73 28 68 32 64C38 58 45 54 53 50C61 46 68 43 74 37.7C80 33 84.5 28 86.300 23.7C88 19.5 89.5 15 90.6 11.4Z" fill="#ffa954"/></g><g fill="none" stroke="#e0861c" stroke-width="1.7" stroke-dasharray="8 3.5"><path d="M96.8 20C97 33 94 45 91.5 51.7C88 60 84 67 67 88.5"/><path d="M103.8 22C108 30 111 37 112.5 43C114.500 50 115 57 114.3 62.2C113.500 69 112 75 110 79.8"/><path d="M123 32.4C129 39 134 46 137 51.7C140 57 142 62 143.2 67.5C144 72 143.500 76 142.700 79.800"/></g><circle cx="70" cy="192.8" r="5.800" fill="#261c1c"/><circle cx="121.700" cy="192.800" r="5.800" fill="#261c1c"/><path d="M82.500 203.500v1.500a13.900 11 0 0 0 27.800 0v-1.500" fill="none" stroke="#261c1c" stroke-width="5" stroke-linecap="round"/></g><g transform="translate(1240.0 764.4) scale(1.0000)"><g fill="#000" stroke="#000" stroke-width="22" stroke-linejoin="round"><path d="M22.3 137.6L173 137.6L164.3 214Q163 226 152 226L44 226Q32.5 226 31 214Z"/><path d="M24.9 93C17 100 10.9 109 10.9 118.3C10.9 128 16 134 22.3 137.6L24.5 165.3A5.45 5.7 0 0 0 35.4 165.3L35.4 146A5.7 5.7 0 0 1 46.8 146L46.8 159.9A6.6 6.6 0 0 0 60 159.9L60 142.4A6.5 6.5 0 0 1 73 142.4L73 168.7A6.65 6.65 0 0 0 86.3 168.7L86.3 137.1A6.55 6.55 0 0 1 99.4 137.1L99.4 152.5A6.15 6.15 0 0 0 111.7 152.5L111.7 145.5A6.15 6.15 0 0 1 124 145.5L124 176.7A6.5 6.5 0 0 0 137 176.7L137 146.5A6.2 6.2 0 0 1 149.4 146.5L149.4 175.3A7 7 0 0 0 163.4 175.3L163.4 150C163.4 143 168 139 173 137.6C180 134 184.4 128 184.4 120C184.4 109 177 99 169 91Z"/><path d="M90.6 11.4C100 12 112 17 123 25.4C136 35 148 50 156.4 62.2C162 71 166 80 169 91C167 98 161 102 156 102C151 102 146.5 101 143.8 99.5C141 110 131 117 120.4 117C110 117 100 110 97.7 100.8C95 110 87 116.6 78.4 116.6C69 116.6 60.5 108 58.2 97.3C55 101 48 102.5 40.7 102.2C33 102 27 98 24.9 93C22.5 88 22.5 84 23.5 79.8C25 73 28 68 32 64C38 58 45 54 53 50C61 46 68 43 74 37.7C80 33 84.5 28 86.300 23.7C88 19.5 89.5 15 90.6 11.4Z"/></g><path d="M86.3 23.7C88 19.5 89.5 15 90.6 11.4C100 12 106 14 112 17.5" fill="none" stroke="#000" stroke-width="22" stroke-linejoin="miter" stroke-miterlimit="4"/><g stroke="#1a0f08" stroke-width="1.5" stroke-linejoin="round"><path d="M22.3 137.6L173 137.6L164.3 214Q163 226 152 226L44 226Q32.5 226 31 214Z" fill="#ffe2a6"/><rect x="84" y="126" width="18" height="14" fill="#ffe2a6" stroke="none"/><path d="M24.9 93C17 100 10.9 109 10.9 118.3C10.9 128 16 134 22.3 137.6L24.5 165.3A5.45 5.7 0 0 0 35.4 165.3L35.4 146A5.7 5.7 0 0 1 46.8 146L46.8 159.9A6.6 6.6 0 0 0 60 159.9L60 142.4A6.5 6.5 0 0 1 73 142.4L73 168.7A6.65 6.65 0 0 0 86.3 168.7L86.3 137.1A6.55 6.55 0 0 1 99.4 137.1L99.4 152.5A6.15 6.15 0 0 0 111.7 152.5L111.7 145.5A6.15 6.15 0 0 1 124 145.5L124 176.7A6.5 6.5 0 0 0 137 176.7L137 146.5A6.2 6.2 0 0 1 149.4 146.5L149.4 175.3A7 7 0 0 0 163.4 175.3L163.4 150C163.4 143 168 139 173 137.6C180 134 184.4 128 184.4 120C184.4 109 177 99 169 91Z" fill="#ffd6e6"/><path d="M90.6 11.4C100 12 112 17 123 25.4C136 35 148 50 156.4 62.2C162 71 166 80 169 91C167 98 161 102 156 102C151 102 146.5 101 143.8 99.5C141 110 131 117 120.4 117C110 117 100 110 97.7 100.8C95 110 87 116.6 78.4 116.6C69 116.6 60.5 108 58.2 97.3C55 101 48 102.5 40.7 102.2C33 102 27 98 24.9 93C22.5 88 22.5 84 23.5 79.8C25 73 28 68 32 64C38 58 45 54 53 50C61 46 68 43 74 37.7C80 33 84.5 28 86.300 23.7C88 19.5 89.5 15 90.6 11.4Z" fill="#faf5ef"/></g><g fill="none" stroke="#cdb39a" stroke-width="1.7" stroke-dasharray="8 3.5"><path d="M96.8 20C97 33 94 45 91.5 51.7C88 60 84 67 67 88.5"/><path d="M103.8 22C108 30 111 37 112.5 43C114.500 50 115 57 114.3 62.2C113.500 69 112 75 110 79.8"/><path d="M123 32.4C129 39 134 46 137 51.7C140 57 142 62 143.2 67.5C144 72 143.500 76 142.700 79.800"/></g><circle cx="70" cy="192.8" r="5.800" fill="#261c1c"/><circle cx="121.700" cy="192.800" r="5.800" fill="#261c1c"/><path d="M82.500 203.500v1.500a13.900 11 0 0 0 27.800 0v-1.500" fill="none" stroke="#261c1c" stroke-width="5" stroke-linecap="round"/></g><g transform="translate(526.0 1151.8) scale(0.7322)"><g fill="#c4956e" stroke="#c4956e" stroke-width="22" stroke-linejoin="round"><path d="M22.3 137.6L173 137.6L164.3 214Q163 226 152 226L44 226Q32.5 226 31 214Z"/><path d="M24.9 93C17 100 10.9 109 10.9 118.3C10.9 128 16 134 22.3 137.6L24.5 165.3A5.45 5.7 0 0 0 35.4 165.3L35.4 146A5.7 5.7 0 0 1 46.8 146L46.8 159.9A6.6 6.6 0 0 0 60 159.9L60 142.4A6.5 6.5 0 0 1 73 142.4L73 168.7A6.65 6.65 0 0 0 86.3 168.7L86.3 137.1A6.55 6.55 0 0 1 99.4 137.1L99.4 152.5A6.15 6.15 0 0 0 111.7 152.5L111.7 145.5A6.15 6.15 0 0 1 124 145.5L124 176.7A6.5 6.5 0 0 0 137 176.7L137 146.5A6.2 6.2 0 0 1 149.4 146.5L149.4 175.3A7 7 0 0 0 163.4 175.3L163.4 150C163.4 143 168 139 173 137.6C180 134 184.4 128 184.4 120C184.4 109 177 99 169 91Z"/><path d="M90.6 11.4C100 12 112 17 123 25.4C136 35 148 50 156.4 62.2C162 71 166 80 169 91C167 98 161 102 156 102C151 102 146.5 101 143.8 99.5C141 110 131 117 120.4 117C110 117 100 110 97.7 100.8C95 110 87 116.6 78.4 116.6C69 116.6 60.5 108 58.2 97.3C55 101 48 102.5 40.7 102.2C33 102 27 98 24.9 93C22.5 88 22.5 84 23.5 79.8C25 73 28 68 32 64C38 58 45 54 53 50C61 46 68 43 74 37.7C80 33 84.5 28 86.300 23.7C88 19.5 89.5 15 90.6 11.4Z"/></g><path d="M86.3 23.7C88 19.5 89.5 15 90.6 11.4C100 12 106 14 112 17.5" fill="none" stroke="#c4956e" stroke-width="22" stroke-linejoin="miter" stroke-miterlimit="4"/><g stroke="#c4956e" stroke-width="1.5" stroke-linejoin="round"><path d="M22.3 137.6L173 137.6L164.3 214Q163 226 152 226L44 226Q32.5 226 31 214Z" fill="#fbf6f1"/><rect x="84" y="126" width="18" height="14" fill="#fbf6f1" stroke="none"/><path d="M24.9 93C17 100 10.9 109 10.9 118.3C10.9 128 16 134 22.3 137.6L24.5 165.3A5.45 5.7 0 0 0 35.4 165.3L35.4 146A5.7 5.7 0 0 1 46.8 146L46.8 159.9A6.6 6.6 0 0 0 60 159.9L60 142.4A6.5 6.5 0 0 1 73 142.4L73 168.7A6.65 6.65 0 0 0 86.3 168.7L86.3 137.1A6.55 6.55 0 0 1 99.4 137.1L99.4 152.5A6.15 6.15 0 0 0 111.7 152.5L111.7 145.5A6.15 6.15 0 0 1 124 145.5L124 176.7A6.5 6.5 0 0 0 137 176.7L137 146.5A6.2 6.2 0 0 1 149.4 146.5L149.4 175.3A7 7 0 0 0 163.4 175.3L163.4 150C163.4 143 168 139 173 137.6C180 134 184.4 128 184.4 120C184.4 109 177 99 169 91Z" fill="#fbf6f1"/><path d="M90.6 11.4C100 12 112 17 123 25.4C136 35 148 50 156.4 62.2C162 71 166 80 169 91C167 98 161 102 156 102C151 102 146.5 101 143.8 99.5C141 110 131 117 120.4 117C110 117 100 110 97.7 100.8C95 110 87 116.6 78.4 116.6C69 116.6 60.5 108 58.2 97.3C55 101 48 102.5 40.7 102.2C33 102 27 98 24.9 93C22.5 88 22.5 84 23.5 79.8C25 73 28 68 32 64C38 58 45 54 53 50C61 46 68 43 74 37.7C80 33 84.5 28 86.300 23.7C88 19.5 89.5 15 90.6 11.4Z" fill="#fbf6f1"/></g><g fill="none" stroke="#9a8f86" stroke-width="1.7" stroke-dasharray="8 3.5"><path d="M96.8 20C97 33 94 45 91.5 51.7C88 60 84 67 67 88.5"/><path d="M103.8 22C108 30 111 37 112.5 43C114.500 50 115 57 114.3 62.2C113.500 69 112 75 110 79.8"/><path d="M123 32.4C129 39 134 46 137 51.7C140 57 142 62 143.2 67.5C144 72 143.500 76 142.700 79.800"/></g><circle cx="70" cy="192.8" r="5.800" fill="#c4956e"/><circle cx="121.700" cy="192.800" r="5.800" fill="#c4956e"/><path d="M82.500 203.500v1.500a13.900 11 0 0 0 27.800 0v-1.500" fill="none" stroke="#c4956e" stroke-width="5" stroke-linecap="round"/></g><path d="M653 1296C668 1294 680 1292.500 694 1291C706 1289.500 718 1288 728 1286.700C733 1286 737 1284.400 741.600 1284.400C748 1284.400 753 1285 755.200 1286.700C758.500 1288 760 1289.500 759.800 1291.200C759.500 1294 757.500 1296.500 755.200 1298C751 1300.500 745 1302 739.400 1303.700C735 1305.500 730 1305.500 725.800 1307C713 1311 700 1314 687.200 1317.300C674 1320.500 660 1323 648.700 1324C645 1324.300 642 1323.800 639.600 1323" fill="none" stroke="#3a8fae" stroke-width="1.200"/><path d="M603 1326C625 1324 648 1319.500 690.600 1305.300" fill="none" stroke="#4a8a3a" stroke-width="1.300"/><path d="M684 1303l7 2.300l-4 5.500" fill="none" stroke="#4a8a3a" stroke-width="1.200"/><path d="M687.200 1311.500l4.300 12h-8.600z" fill="#1a9a4a"/><g stroke="#2a8fd8" stroke-width="2" fill="#fff"><rect x="588.7" y="1317.7" width="15" height="15"/><path d="M588.7 1317.7L603.7 1332.7M603.7 1317.7L588.7 1332.7"/></g><defs><filter id="blr" x="-20%" y="-50%" width="140%" height="200%"><feGaussianBlur stdDeviation="1.600"/></filter></defs><path d="M790 1322L895 1322C930 1316 960 1305 985 1292L1005 1286L975 1284C940 1284 915 1288 893 1296L870 1310Z" fill="#7a7a7a" filter="url(#blr)"/><g transform="translate(768.4 1148.0) scale(0.7337)"><g fill="#000" stroke="#000" stroke-width="22" stroke-linejoin="round"><path d="M22.3 137.6L173 137.6L164.3 214Q163 226 152 226L44 226Q32.5 226 31 214Z"/><path d="M24.9 93C17 100 10.9 109 10.9 118.3C10.9 128 16 134 22.3 137.6L24.5 165.3A5.45 5.7 0 0 0 35.4 165.3L35.4 146A5.7 5.7 0 0 1 46.8 146L46.8 159.9A6.6 6.6 0 0 0 60 159.9L60 142.4A6.5 6.5 0 0 1 73 142.4L73 168.7A6.65 6.65 0 0 0 86.3 168.7L86.3 137.1A6.55 6.55 0 0 1 99.4 137.1L99.4 152.5A6.15 6.15 0 0 0 111.7 152.5L111.7 145.5A6.15 6.15 0 0 1 124 145.5L124 176.7A6.5 6.5 0 0 0 137 176.7L137 146.5A6.2 6.2 0 0 1 149.4 146.5L149.4 175.3A7 7 0 0 0 163.4 175.3L163.4 150C163.4 143 168 139 173 137.6C180 134 184.4 128 184.4 120C184.4 109 177 99 169 91Z"/><path d="M90.6 11.4C100 12 112 17 123 25.4C136 35 148 50 156.4 62.2C162 71 166 80 169 91C167 98 161 102 156 102C151 102 146.5 101 143.8 99.5C141 110 131 117 120.4 117C110 117 100 110 97.7 100.8C95 110 87 116.6 78.4 116.6C69 116.6 60.5 108 58.2 97.3C55 101 48 102.5 40.7 102.2C33 102 27 98 24.9 93C22.5 88 22.5 84 23.5 79.8C25 73 28 68 32 64C38 58 45 54 53 50C61 46 68 43 74 37.7C80 33 84.5 28 86.300 23.7C88 19.5 89.5 15 90.6 11.4Z"/></g><path d="M86.3 23.7C88 19.5 89.5 15 90.6 11.4C100 12 106 14 112 17.5" fill="none" stroke="#000" stroke-width="22" stroke-linejoin="miter" stroke-miterlimit="4"/><g stroke="#1a0f08" stroke-width="1.5" stroke-linejoin="round"><path d="M22.3 137.6L173 137.6L164.3 214Q163 226 152 226L44 226Q32.5 226 31 214Z" fill="#c28f69"/><rect x="84" y="126" width="18" height="14" fill="#c28f69" stroke="none"/><path d="M24.9 93C17 100 10.9 109 10.9 118.3C10.9 128 16 134 22.3 137.6L24.5 165.3A5.45 5.7 0 0 0 35.4 165.3L35.4 146A5.7 5.7 0 0 1 46.8 146L46.8 159.9A6.6 6.6 0 0 0 60 159.9L60 142.4A6.5 6.5 0 0 1 73 142.4L73 168.7A6.65 6.65 0 0 0 86.3 168.7L86.3 137.1A6.55 6.55 0 0 1 99.4 137.1L99.4 152.5A6.15 6.15 0 0 0 111.7 152.5L111.7 145.5A6.15 6.15 0 0 1 124 145.5L124 176.7A6.5 6.5 0 0 0 137 176.7L137 146.5A6.2 6.2 0 0 1 149.4 146.5L149.4 175.3A7 7 0 0 0 163.4 175.3L163.4 150C163.4 143 168 139 173 137.6C180 134 184.4 128 184.4 120C184.4 109 177 99 169 91Z" fill="#ffe2a6"/><path d="M90.6 11.4C100 12 112 17 123 25.4C136 35 148 50 156.4 62.2C162 71 166 80 169 91C167 98 161 102 156 102C151 102 146.5 101 143.8 99.5C141 110 131 117 120.4 117C110 117 100 110 97.7 100.8C95 110 87 116.6 78.4 116.6C69 116.6 60.5 108 58.2 97.3C55 101 48 102.5 40.7 102.2C33 102 27 98 24.9 93C22.5 88 22.5 84 23.5 79.8C25 73 28 68 32 64C38 58 45 54 53 50C61 46 68 43 74 37.7C80 33 84.5 28 86.300 23.7C88 19.5 89.5 15 90.6 11.4Z" fill="#ffa954"/></g><g fill="none" stroke="#e0861c" stroke-width="1.7" stroke-dasharray="8 3.5"><path d="M96.8 20C97 33 94 45 91.5 51.7C88 60 84 67 67 88.5"/><path d="M103.8 22C108 30 111 37 112.5 43C114.500 50 115 57 114.3 62.2C113.500 69 112 75 110 79.8"/><path d="M123 32.4C129 39 134 46 137 51.7C140 57 142 62 143.2 67.5C144 72 143.500 76 142.700 79.800"/></g><circle cx="70" cy="192.8" r="5.800" fill="#261c1c"/><circle cx="121.700" cy="192.800" r="5.800" fill="#261c1c"/><path d="M82.500 203.500v1.500a13.900 11 0 0 0 27.800 0v-1.500" fill="none" stroke="#261c1c" stroke-width="5" stroke-linecap="round"/></g><path d="M846 1319L978 1290" stroke="#fff" stroke-width="4.500"/><path d="M846 1319L975 1291" stroke="#000" stroke-width="1.500"/><path d="M972 1284.500l16 4.500l-12 9z" fill="#000" stroke="#fff" stroke-width="1.200"/><rect x="989" y="1280" width="12" height="12" fill="#000"/><g transform="rotate(-10 933 1306)"><rect x="930.500" y="1294" width="5" height="25" fill="#fff" stroke="#3a9ade" stroke-width="1.500"/></g><g stroke="#2a8fd8" stroke-width="2" fill="#fff"><rect x="831.0" y="1312.0" width="15" height="15"/><path d="M831.0 1312.0L846.0 1327.0M846.0 1312.0L831.0 1327.0"/></g><path d="M1194 1172C1215 1172 1240 1195 1254 1225C1262 1245 1266 1255 1263 1262C1258 1268 1254 1262 1254 1268L1245 1322C1243 1330 1240 1332 1234 1332L1160 1332C1153 1332 1151 1326 1151 1316" fill="none" stroke="#3a8fae" stroke-width="1.100"/><g transform="translate(1063.7 1142.0) scale(0.7327)"><g fill="#c4956e" stroke="#c4956e" stroke-width="22" stroke-linejoin="round"><path d="M22.3 137.6L173 137.6L164.3 214Q163 226 152 226L44 226Q32.5 226 31 214Z"/><path d="M24.9 93C17 100 10.9 109 10.9 118.3C10.9 128 16 134 22.3 137.6L24.5 165.3A5.45 5.7 0 0 0 35.4 165.3L35.4 146A5.7 5.7 0 0 1 46.8 146L46.8 159.9A6.6 6.6 0 0 0 60 159.9L60 142.4A6.5 6.5 0 0 1 73 142.4L73 168.7A6.65 6.65 0 0 0 86.3 168.7L86.3 137.1A6.55 6.55 0 0 1 99.4 137.1L99.4 152.5A6.15 6.15 0 0 0 111.7 152.5L111.7 145.5A6.15 6.15 0 0 1 124 145.5L124 176.7A6.5 6.5 0 0 0 137 176.7L137 146.5A6.2 6.2 0 0 1 149.4 146.5L149.4 175.3A7 7 0 0 0 163.4 175.3L163.4 150C163.4 143 168 139 173 137.6C180 134 184.4 128 184.4 120C184.4 109 177 99 169 91Z"/><path d="M90.6 11.4C100 12 112 17 123 25.4C136 35 148 50 156.4 62.2C162 71 166 80 169 91C167 98 161 102 156 102C151 102 146.5 101 143.8 99.5C141 110 131 117 120.4 117C110 117 100 110 97.7 100.8C95 110 87 116.6 78.4 116.6C69 116.6 60.5 108 58.2 97.3C55 101 48 102.5 40.7 102.2C33 102 27 98 24.9 93C22.5 88 22.5 84 23.5 79.8C25 73 28 68 32 64C38 58 45 54 53 50C61 46 68 43 74 37.7C80 33 84.5 28 86.300 23.7C88 19.5 89.5 15 90.6 11.4Z"/></g><path d="M86.3 23.7C88 19.5 89.5 15 90.6 11.4C100 12 106 14 112 17.5" fill="none" stroke="#c4956e" stroke-width="22" stroke-linejoin="miter" stroke-miterlimit="4"/><g stroke="#c4956e" stroke-width="1.5" stroke-linejoin="round"><path d="M22.3 137.6L173 137.6L164.3 214Q163 226 152 226L44 226Q32.5 226 31 214Z" fill="#fbf6f1"/><rect x="84" y="126" width="18" height="14" fill="#fbf6f1" stroke="none"/><path d="M24.9 93C17 100 10.9 109 10.9 118.3C10.9 128 16 134 22.3 137.6L24.5 165.3A5.45 5.7 0 0 0 35.4 165.3L35.4 146A5.7 5.7 0 0 1 46.8 146L46.8 159.9A6.6 6.6 0 0 0 60 159.9L60 142.4A6.5 6.5 0 0 1 73 142.4L73 168.7A6.65 6.65 0 0 0 86.3 168.7L86.3 137.1A6.55 6.55 0 0 1 99.4 137.1L99.4 152.5A6.15 6.15 0 0 0 111.7 152.5L111.7 145.5A6.15 6.15 0 0 1 124 145.5L124 176.7A6.5 6.5 0 0 0 137 176.7L137 146.5A6.2 6.2 0 0 1 149.4 146.5L149.4 175.3A7 7 0 0 0 163.4 175.3L163.4 150C163.4 143 168 139 173 137.6C180 134 184.4 128 184.4 120C184.4 109 177 99 169 91Z" fill="#fbf6f1"/><path d="M90.6 11.4C100 12 112 17 123 25.4C136 35 148 50 156.4 62.2C162 71 166 80 169 91C167 98 161 102 156 102C151 102 146.5 101 143.8 99.5C141 110 131 117 120.4 117C110 117 100 110 97.7 100.8C95 110 87 116.6 78.4 116.6C69 116.6 60.5 108 58.2 97.3C55 101 48 102.5 40.7 102.2C33 102 27 98 24.9 93C22.5 88 22.5 84 23.5 79.8C25 73 28 68 32 64C38 58 45 54 53 50C61 46 68 43 74 37.7C80 33 84.5 28 86.300 23.7C88 19.5 89.5 15 90.6 11.4Z" fill="#fbf6f1"/></g><g fill="none" stroke="#9a8f86" stroke-width="1.7" stroke-dasharray="8 3.5"><path d="M96.8 20C97 33 94 45 91.5 51.7C88 60 84 67 67 88.5"/><path d="M103.8 22C108 30 111 37 112.5 43C114.500 50 115 57 114.3 62.2C113.500 69 112 75 110 79.8"/><path d="M123 32.4C129 39 134 46 137 51.7C140 57 142 62 143.2 67.5C144 72 143.500 76 142.700 79.800"/></g><circle cx="70" cy="192.8" r="5.800" fill="#c4956e"/><circle cx="121.700" cy="192.800" r="5.800" fill="#c4956e"/><path d="M82.500 203.500v1.500a13.900 11 0 0 0 27.800 0v-1.500" fill="none" stroke="#c4956e" stroke-width="5" stroke-linecap="round"/></g><path d="M1140 1243L1214 1292" stroke="#4a6a4a" stroke-width="1.200"/><path d="M1207 1291l8 1.500l-2-8" fill="none" stroke="#4a6a4a" stroke-width="1.100"/><path d="M1219.500 1295l4.500 12h-9z" fill="#1a9a4a"/><g stroke="#2a8fd8" stroke-width="2" fill="#fff"><rect x="1128.0" y="1229.0" width="15" height="15"/><path d="M1128.0 1229.0L1143.0 1244.0M1143.0 1229.0L1128.0 1244.0"/></g><g transform="translate(1358.0 1166.0) scale(0.7322)"><g fill="#000" stroke="#000" stroke-width="22" stroke-linejoin="round"><path d="M22.3 137.6L173 137.6L164.3 214Q163 226 152 226L44 226Q32.5 226 31 214Z"/><path d="M24.9 93C17 100 10.9 109 10.9 118.3C10.9 128 16 134 22.3 137.6L24.5 165.3A5.45 5.7 0 0 0 35.4 165.3L35.4 146A5.7 5.7 0 0 1 46.8 146L46.8 159.9A6.6 6.6 0 0 0 60 159.9L60 142.4A6.5 6.5 0 0 1 73 142.4L73 168.7A6.65 6.65 0 0 0 86.3 168.7L86.3 137.1A6.55 6.55 0 0 1 99.4 137.1L99.4 152.5A6.15 6.15 0 0 0 111.7 152.5L111.7 145.5A6.15 6.15 0 0 1 124 145.5L124 176.7A6.5 6.5 0 0 0 137 176.7L137 146.5A6.2 6.2 0 0 1 149.4 146.5L149.4 175.3A7 7 0 0 0 163.4 175.3L163.4 150C163.4 143 168 139 173 137.6C180 134 184.4 128 184.4 120C184.4 109 177 99 169 91Z"/><path d="M90.6 11.4C100 12 112 17 123 25.4C136 35 148 50 156.4 62.2C162 71 166 80 169 91C167 98 161 102 156 102C151 102 146.5 101 143.8 99.5C141 110 131 117 120.4 117C110 117 100 110 97.7 100.8C95 110 87 116.6 78.4 116.6C69 116.6 60.5 108 58.2 97.3C55 101 48 102.5 40.7 102.2C33 102 27 98 24.9 93C22.5 88 22.5 84 23.5 79.8C25 73 28 68 32 64C38 58 45 54 53 50C61 46 68 43 74 37.7C80 33 84.5 28 86.300 23.7C88 19.5 89.5 15 90.6 11.4Z"/></g><path d="M86.3 23.7C88 19.5 89.5 15 90.6 11.4C100 12 106 14 112 17.5" fill="none" stroke="#000" stroke-width="22" stroke-linejoin="miter" stroke-miterlimit="4"/></g><g transform="translate(1353.9 1163.9) scale(0.7322)"><g fill="#000" stroke="#000" stroke-width="22" stroke-linejoin="round"><path d="M22.3 137.6L173 137.6L164.3 214Q163 226 152 226L44 226Q32.5 226 31 214Z"/><path d="M24.9 93C17 100 10.9 109 10.9 118.3C10.9 128 16 134 22.3 137.6L24.5 165.3A5.45 5.7 0 0 0 35.4 165.3L35.4 146A5.7 5.7 0 0 1 46.8 146L46.8 159.9A6.6 6.6 0 0 0 60 159.9L60 142.4A6.5 6.5 0 0 1 73 142.4L73 168.7A6.65 6.65 0 0 0 86.3 168.7L86.3 137.1A6.55 6.55 0 0 1 99.4 137.1L99.4 152.5A6.15 6.15 0 0 0 111.7 152.5L111.7 145.5A6.15 6.15 0 0 1 124 145.5L124 176.7A6.5 6.5 0 0 0 137 176.7L137 146.5A6.2 6.2 0 0 1 149.4 146.5L149.4 175.3A7 7 0 0 0 163.4 175.3L163.4 150C163.4 143 168 139 173 137.6C180 134 184.4 128 184.4 120C184.4 109 177 99 169 91Z"/><path d="M90.6 11.4C100 12 112 17 123 25.4C136 35 148 50 156.4 62.2C162 71 166 80 169 91C167 98 161 102 156 102C151 102 146.5 101 143.8 99.5C141 110 131 117 120.4 117C110 117 100 110 97.7 100.8C95 110 87 116.6 78.4 116.6C69 116.6 60.5 108 58.2 97.3C55 101 48 102.5 40.7 102.2C33 102 27 98 24.9 93C22.5 88 22.5 84 23.5 79.8C25 73 28 68 32 64C38 58 45 54 53 50C61 46 68 43 74 37.7C80 33 84.5 28 86.300 23.7C88 19.5 89.5 15 90.6 11.4Z"/></g><path d="M86.3 23.7C88 19.5 89.5 15 90.6 11.4C100 12 106 14 112 17.5" fill="none" stroke="#000" stroke-width="22" stroke-linejoin="miter" stroke-miterlimit="4"/></g><g transform="translate(1349.7 1161.9) scale(0.7322)"><g fill="#000" stroke="#000" stroke-width="22" stroke-linejoin="round"><path d="M22.3 137.6L173 137.6L164.3 214Q163 226 152 226L44 226Q32.5 226 31 214Z"/><path d="M24.9 93C17 100 10.9 109 10.9 118.3C10.9 128 16 134 22.3 137.6L24.5 165.3A5.45 5.7 0 0 0 35.4 165.3L35.4 146A5.7 5.7 0 0 1 46.8 146L46.8 159.9A6.6 6.6 0 0 0 60 159.9L60 142.4A6.5 6.5 0 0 1 73 142.4L73 168.7A6.65 6.65 0 0 0 86.3 168.7L86.3 137.1A6.55 6.55 0 0 1 99.4 137.1L99.4 152.5A6.15 6.15 0 0 0 111.7 152.5L111.7 145.5A6.15 6.15 0 0 1 124 145.5L124 176.7A6.5 6.5 0 0 0 137 176.7L137 146.5A6.2 6.2 0 0 1 149.4 146.5L149.4 175.3A7 7 0 0 0 163.4 175.3L163.4 150C163.4 143 168 139 173 137.6C180 134 184.4 128 184.4 120C184.4 109 177 99 169 91Z"/><path d="M90.6 11.4C100 12 112 17 123 25.4C136 35 148 50 156.4 62.2C162 71 166 80 169 91C167 98 161 102 156 102C151 102 146.5 101 143.8 99.5C141 110 131 117 120.4 117C110 117 100 110 97.7 100.8C95 110 87 116.6 78.4 116.6C69 116.6 60.5 108 58.2 97.3C55 101 48 102.5 40.7 102.2C33 102 27 98 24.9 93C22.5 88 22.5 84 23.5 79.8C25 73 28 68 32 64C38 58 45 54 53 50C61 46 68 43 74 37.7C80 33 84.5 28 86.300 23.7C88 19.5 89.5 15 90.6 11.4Z"/></g><path d="M86.3 23.7C88 19.5 89.5 15 90.6 11.4C100 12 106 14 112 17.5" fill="none" stroke="#000" stroke-width="22" stroke-linejoin="miter" stroke-miterlimit="4"/></g><g transform="translate(1345.6 1159.8) scale(0.7322)"><g fill="#000" stroke="#000" stroke-width="22" stroke-linejoin="round"><path d="M22.3 137.6L173 137.6L164.3 214Q163 226 152 226L44 226Q32.5 226 31 214Z"/><path d="M24.9 93C17 100 10.9 109 10.9 118.3C10.9 128 16 134 22.3 137.6L24.5 165.3A5.45 5.7 0 0 0 35.4 165.3L35.4 146A5.7 5.7 0 0 1 46.8 146L46.8 159.9A6.6 6.6 0 0 0 60 159.9L60 142.4A6.5 6.5 0 0 1 73 142.4L73 168.7A6.65 6.65 0 0 0 86.3 168.7L86.3 137.1A6.55 6.55 0 0 1 99.4 137.1L99.4 152.5A6.15 6.15 0 0 0 111.7 152.5L111.7 145.5A6.15 6.15 0 0 1 124 145.5L124 176.7A6.5 6.5 0 0 0 137 176.7L137 146.5A6.2 6.2 0 0 1 149.4 146.5L149.4 175.3A7 7 0 0 0 163.4 175.3L163.4 150C163.4 143 168 139 173 137.6C180 134 184.4 128 184.4 120C184.4 109 177 99 169 91Z"/><path d="M90.6 11.4C100 12 112 17 123 25.4C136 35 148 50 156.4 62.2C162 71 166 80 169 91C167 98 161 102 156 102C151 102 146.5 101 143.8 99.5C141 110 131 117 120.4 117C110 117 100 110 97.7 100.8C95 110 87 116.6 78.4 116.6C69 116.6 60.5 108 58.2 97.3C55 101 48 102.5 40.7 102.2C33 102 27 98 24.9 93C22.5 88 22.5 84 23.5 79.8C25 73 28 68 32 64C38 58 45 54 53 50C61 46 68 43 74 37.7C80 33 84.5 28 86.300 23.7C88 19.5 89.5 15 90.6 11.4Z"/></g><path d="M86.3 23.7C88 19.5 89.5 15 90.6 11.4C100 12 106 14 112 17.5" fill="none" stroke="#000" stroke-width="22" stroke-linejoin="miter" stroke-miterlimit="4"/></g><g transform="translate(1341.4 1157.7) scale(0.7322)"><g fill="#000" stroke="#000" stroke-width="22" stroke-linejoin="round"><path d="M22.3 137.6L173 137.6L164.3 214Q163 226 152 226L44 226Q32.5 226 31 214Z"/><path d="M24.9 93C17 100 10.9 109 10.9 118.3C10.9 128 16 134 22.3 137.6L24.5 165.3A5.45 5.7 0 0 0 35.4 165.3L35.4 146A5.7 5.7 0 0 1 46.8 146L46.8 159.9A6.6 6.6 0 0 0 60 159.9L60 142.4A6.5 6.5 0 0 1 73 142.4L73 168.7A6.65 6.65 0 0 0 86.3 168.7L86.3 137.1A6.55 6.55 0 0 1 99.4 137.1L99.4 152.5A6.15 6.15 0 0 0 111.7 152.5L111.7 145.5A6.15 6.15 0 0 1 124 145.5L124 176.7A6.5 6.5 0 0 0 137 176.7L137 146.5A6.2 6.2 0 0 1 149.4 146.5L149.4 175.3A7 7 0 0 0 163.4 175.3L163.4 150C163.4 143 168 139 173 137.6C180 134 184.4 128 184.4 120C184.4 109 177 99 169 91Z"/><path d="M90.6 11.4C100 12 112 17 123 25.4C136 35 148 50 156.4 62.2C162 71 166 80 169 91C167 98 161 102 156 102C151 102 146.5 101 143.8 99.5C141 110 131 117 120.4 117C110 117 100 110 97.7 100.8C95 110 87 116.6 78.4 116.6C69 116.6 60.5 108 58.2 97.3C55 101 48 102.5 40.7 102.2C33 102 27 98 24.9 93C22.5 88 22.5 84 23.5 79.8C25 73 28 68 32 64C38 58 45 54 53 50C61 46 68 43 74 37.7C80 33 84.5 28 86.300 23.7C88 19.5 89.5 15 90.6 11.4Z"/></g><path d="M86.3 23.7C88 19.5 89.5 15 90.6 11.4C100 12 106 14 112 17.5" fill="none" stroke="#000" stroke-width="22" stroke-linejoin="miter" stroke-miterlimit="4"/></g><g transform="translate(1337.3 1155.6) scale(0.7322)"><g fill="#000" stroke="#000" stroke-width="22" stroke-linejoin="round"><path d="M22.3 137.6L173 137.6L164.3 214Q163 226 152 226L44 226Q32.5 226 31 214Z"/><path d="M24.9 93C17 100 10.9 109 10.9 118.3C10.9 128 16 134 22.3 137.6L24.5 165.3A5.45 5.7 0 0 0 35.4 165.3L35.4 146A5.7 5.7 0 0 1 46.8 146L46.8 159.9A6.6 6.6 0 0 0 60 159.9L60 142.4A6.5 6.5 0 0 1 73 142.4L73 168.7A6.65 6.65 0 0 0 86.3 168.7L86.3 137.1A6.55 6.55 0 0 1 99.4 137.1L99.4 152.5A6.15 6.15 0 0 0 111.7 152.5L111.7 145.5A6.15 6.15 0 0 1 124 145.5L124 176.7A6.5 6.5 0 0 0 137 176.7L137 146.5A6.2 6.2 0 0 1 149.4 146.5L149.4 175.3A7 7 0 0 0 163.4 175.3L163.4 150C163.4 143 168 139 173 137.6C180 134 184.4 128 184.4 120C184.4 109 177 99 169 91Z"/><path d="M90.6 11.4C100 12 112 17 123 25.4C136 35 148 50 156.4 62.2C162 71 166 80 169 91C167 98 161 102 156 102C151 102 146.5 101 143.8 99.5C141 110 131 117 120.4 117C110 117 100 110 97.7 100.8C95 110 87 116.6 78.4 116.6C69 116.6 60.5 108 58.2 97.3C55 101 48 102.5 40.7 102.2C33 102 27 98 24.9 93C22.5 88 22.5 84 23.5 79.8C25 73 28 68 32 64C38 58 45 54 53 50C61 46 68 43 74 37.7C80 33 84.5 28 86.300 23.7C88 19.5 89.5 15 90.6 11.4Z"/></g><path d="M86.3 23.7C88 19.5 89.5 15 90.6 11.4C100 12 106 14 112 17.5" fill="none" stroke="#000" stroke-width="22" stroke-linejoin="miter" stroke-miterlimit="4"/></g><g transform="translate(1333.1 1153.6) scale(0.7322)"><g fill="#000" stroke="#000" stroke-width="22" stroke-linejoin="round"><path d="M22.3 137.6L173 137.6L164.3 214Q163 226 152 226L44 226Q32.5 226 31 214Z"/><path d="M24.9 93C17 100 10.9 109 10.9 118.3C10.9 128 16 134 22.3 137.6L24.5 165.3A5.45 5.7 0 0 0 35.4 165.3L35.4 146A5.7 5.7 0 0 1 46.8 146L46.8 159.9A6.6 6.6 0 0 0 60 159.9L60 142.4A6.5 6.5 0 0 1 73 142.4L73 168.7A6.65 6.65 0 0 0 86.3 168.7L86.3 137.1A6.55 6.55 0 0 1 99.4 137.1L99.4 152.5A6.15 6.15 0 0 0 111.7 152.5L111.7 145.5A6.15 6.15 0 0 1 124 145.5L124 176.7A6.5 6.5 0 0 0 137 176.7L137 146.5A6.2 6.2 0 0 1 149.4 146.5L149.4 175.3A7 7 0 0 0 163.4 175.3L163.4 150C163.4 143 168 139 173 137.6C180 134 184.4 128 184.4 120C184.4 109 177 99 169 91Z"/><path d="M90.6 11.4C100 12 112 17 123 25.4C136 35 148 50 156.4 62.2C162 71 166 80 169 91C167 98 161 102 156 102C151 102 146.5 101 143.8 99.5C141 110 131 117 120.4 117C110 117 100 110 97.7 100.8C95 110 87 116.6 78.4 116.6C69 116.6 60.5 108 58.2 97.3C55 101 48 102.5 40.7 102.2C33 102 27 98 24.9 93C22.5 88 22.5 84 23.5 79.8C25 73 28 68 32 64C38 58 45 54 53 50C61 46 68 43 74 37.7C80 33 84.5 28 86.300 23.7C88 19.5 89.5 15 90.6 11.4Z"/></g><path d="M86.3 23.7C88 19.5 89.5 15 90.6 11.4C100 12 106 14 112 17.5" fill="none" stroke="#000" stroke-width="22" stroke-linejoin="miter" stroke-miterlimit="4"/></g><g transform="translate(1329.0 1151.5) scale(0.7322)"><g fill="#000" stroke="#000" stroke-width="22" stroke-linejoin="round"><path d="M22.3 137.6L173 137.6L164.3 214Q163 226 152 226L44 226Q32.5 226 31 214Z"/><path d="M24.9 93C17 100 10.9 109 10.9 118.3C10.9 128 16 134 22.3 137.6L24.5 165.3A5.45 5.7 0 0 0 35.4 165.3L35.4 146A5.7 5.7 0 0 1 46.8 146L46.8 159.9A6.6 6.6 0 0 0 60 159.9L60 142.4A6.5 6.5 0 0 1 73 142.4L73 168.7A6.65 6.65 0 0 0 86.3 168.7L86.3 137.1A6.55 6.55 0 0 1 99.4 137.1L99.4 152.5A6.15 6.15 0 0 0 111.7 152.5L111.7 145.5A6.15 6.15 0 0 1 124 145.5L124 176.7A6.5 6.5 0 0 0 137 176.7L137 146.5A6.2 6.2 0 0 1 149.4 146.5L149.4 175.3A7 7 0 0 0 163.4 175.3L163.4 150C163.4 143 168 139 173 137.6C180 134 184.4 128 184.4 120C184.4 109 177 99 169 91Z"/><path d="M90.6 11.4C100 12 112 17 123 25.4C136 35 148 50 156.4 62.2C162 71 166 80 169 91C167 98 161 102 156 102C151 102 146.5 101 143.8 99.5C141 110 131 117 120.4 117C110 117 100 110 97.7 100.8C95 110 87 116.6 78.4 116.6C69 116.6 60.5 108 58.2 97.3C55 101 48 102.5 40.7 102.2C33 102 27 98 24.9 93C22.5 88 22.5 84 23.5 79.8C25 73 28 68 32 64C38 58 45 54 53 50C61 46 68 43 74 37.7C80 33 84.5 28 86.300 23.7C88 19.5 89.5 15 90.6 11.4Z"/></g><path d="M86.3 23.7C88 19.5 89.5 15 90.6 11.4C100 12 106 14 112 17.5" fill="none" stroke="#000" stroke-width="22" stroke-linejoin="miter" stroke-miterlimit="4"/></g><g transform="translate(1324.9 1149.4) scale(0.7322)"><g fill="#000" stroke="#000" stroke-width="22" stroke-linejoin="round"><path d="M22.3 137.6L173 137.6L164.3 214Q163 226 152 226L44 226Q32.5 226 31 214Z"/><path d="M24.9 93C17 100 10.9 109 10.9 118.3C10.9 128 16 134 22.3 137.6L24.5 165.3A5.45 5.7 0 0 0 35.4 165.3L35.4 146A5.7 5.7 0 0 1 46.8 146L46.8 159.9A6.6 6.6 0 0 0 60 159.9L60 142.4A6.5 6.5 0 0 1 73 142.4L73 168.7A6.65 6.65 0 0 0 86.3 168.7L86.3 137.1A6.55 6.55 0 0 1 99.4 137.1L99.4 152.5A6.15 6.15 0 0 0 111.7 152.5L111.7 145.5A6.15 6.15 0 0 1 124 145.5L124 176.7A6.5 6.5 0 0 0 137 176.7L137 146.5A6.2 6.2 0 0 1 149.4 146.5L149.4 175.3A7 7 0 0 0 163.4 175.3L163.4 150C163.4 143 168 139 173 137.6C180 134 184.4 128 184.4 120C184.4 109 177 99 169 91Z"/><path d="M90.6 11.4C100 12 112 17 123 25.4C136 35 148 50 156.4 62.2C162 71 166 80 169 91C167 98 161 102 156 102C151 102 146.5 101 143.8 99.5C141 110 131 117 120.4 117C110 117 100 110 97.7 100.8C95 110 87 116.6 78.4 116.6C69 116.6 60.5 108 58.2 97.3C55 101 48 102.5 40.7 102.2C33 102 27 98 24.9 93C22.5 88 22.5 84 23.5 79.8C25 73 28 68 32 64C38 58 45 54 53 50C61 46 68 43 74 37.7C80 33 84.5 28 86.300 23.7C88 19.5 89.5 15 90.6 11.4Z"/></g><path d="M86.3 23.7C88 19.5 89.5 15 90.6 11.4C100 12 106 14 112 17.5" fill="none" stroke="#000" stroke-width="22" stroke-linejoin="miter" stroke-miterlimit="4"/></g><g transform="translate(1320.7 1147.4) scale(0.7322)"><g fill="#000" stroke="#000" stroke-width="22" stroke-linejoin="round"><path d="M22.3 137.6L173 137.6L164.3 214Q163 226 152 226L44 226Q32.5 226 31 214Z"/><path d="M24.9 93C17 100 10.9 109 10.9 118.3C10.9 128 16 134 22.3 137.6L24.5 165.3A5.45 5.7 0 0 0 35.4 165.3L35.4 146A5.7 5.7 0 0 1 46.8 146L46.8 159.9A6.6 6.6 0 0 0 60 159.9L60 142.4A6.5 6.5 0 0 1 73 142.4L73 168.7A6.65 6.65 0 0 0 86.3 168.7L86.3 137.1A6.55 6.55 0 0 1 99.4 137.1L99.4 152.5A6.15 6.15 0 0 0 111.7 152.5L111.7 145.5A6.15 6.15 0 0 1 124 145.5L124 176.7A6.5 6.5 0 0 0 137 176.7L137 146.5A6.2 6.2 0 0 1 149.4 146.5L149.4 175.3A7 7 0 0 0 163.4 175.3L163.4 150C163.4 143 168 139 173 137.6C180 134 184.4 128 184.4 120C184.4 109 177 99 169 91Z"/><path d="M90.6 11.4C100 12 112 17 123 25.4C136 35 148 50 156.4 62.2C162 71 166 80 169 91C167 98 161 102 156 102C151 102 146.5 101 143.8 99.5C141 110 131 117 120.4 117C110 117 100 110 97.7 100.8C95 110 87 116.6 78.4 116.6C69 116.6 60.5 108 58.2 97.3C55 101 48 102.5 40.7 102.2C33 102 27 98 24.9 93C22.5 88 22.5 84 23.5 79.8C25 73 28 68 32 64C38 58 45 54 53 50C61 46 68 43 74 37.7C80 33 84.5 28 86.300 23.7C88 19.5 89.5 15 90.6 11.4Z"/></g><path d="M86.3 23.7C88 19.5 89.5 15 90.6 11.4C100 12 106 14 112 17.5" fill="none" stroke="#000" stroke-width="22" stroke-linejoin="miter" stroke-miterlimit="4"/></g><g transform="translate(1316.6 1145.3) scale(0.7322)"><g fill="#000" stroke="#000" stroke-width="22" stroke-linejoin="round"><path d="M22.3 137.6L173 137.6L164.3 214Q163 226 152 226L44 226Q32.5 226 31 214Z"/><path d="M24.9 93C17 100 10.9 109 10.9 118.3C10.9 128 16 134 22.3 137.6L24.5 165.3A5.45 5.7 0 0 0 35.4 165.3L35.4 146A5.7 5.7 0 0 1 46.8 146L46.8 159.9A6.6 6.6 0 0 0 60 159.9L60 142.4A6.5 6.5 0 0 1 73 142.4L73 168.7A6.65 6.65 0 0 0 86.3 168.7L86.3 137.1A6.55 6.55 0 0 1 99.4 137.1L99.4 152.5A6.15 6.15 0 0 0 111.7 152.5L111.7 145.5A6.15 6.15 0 0 1 124 145.5L124 176.7A6.5 6.5 0 0 0 137 176.7L137 146.5A6.2 6.2 0 0 1 149.4 146.5L149.4 175.3A7 7 0 0 0 163.4 175.3L163.4 150C163.4 143 168 139 173 137.6C180 134 184.4 128 184.4 120C184.4 109 177 99 169 91Z"/><path d="M90.6 11.4C100 12 112 17 123 25.4C136 35 148 50 156.4 62.2C162 71 166 80 169 91C167 98 161 102 156 102C151 102 146.5 101 143.8 99.5C141 110 131 117 120.4 117C110 117 100 110 97.7 100.8C95 110 87 116.6 78.4 116.6C69 116.6 60.5 108 58.2 97.3C55 101 48 102.5 40.7 102.2C33 102 27 98 24.9 93C22.5 88 22.5 84 23.5 79.8C25 73 28 68 32 64C38 58 45 54 53 50C61 46 68 43 74 37.7C80 33 84.5 28 86.300 23.7C88 19.5 89.5 15 90.6 11.4Z"/></g><path d="M86.3 23.7C88 19.5 89.5 15 90.6 11.4C100 12 106 14 112 17.5" fill="none" stroke="#000" stroke-width="22" stroke-linejoin="miter" stroke-miterlimit="4"/></g><g transform="translate(1312.4 1143.2) scale(0.7322)"><g fill="#000" stroke="#000" stroke-width="22" stroke-linejoin="round"><path d="M22.3 137.6L173 137.6L164.3 214Q163 226 152 226L44 226Q32.5 226 31 214Z"/><path d="M24.9 93C17 100 10.9 109 10.9 118.3C10.9 128 16 134 22.3 137.6L24.5 165.3A5.45 5.7 0 0 0 35.4 165.3L35.4 146A5.7 5.7 0 0 1 46.8 146L46.8 159.9A6.6 6.6 0 0 0 60 159.9L60 142.4A6.5 6.5 0 0 1 73 142.4L73 168.7A6.65 6.65 0 0 0 86.3 168.7L86.3 137.1A6.55 6.55 0 0 1 99.4 137.1L99.4 152.5A6.15 6.15 0 0 0 111.7 152.5L111.7 145.5A6.15 6.15 0 0 1 124 145.5L124 176.7A6.5 6.5 0 0 0 137 176.7L137 146.5A6.2 6.2 0 0 1 149.4 146.5L149.4 175.3A7 7 0 0 0 163.4 175.3L163.4 150C163.4 143 168 139 173 137.6C180 134 184.4 128 184.4 120C184.4 109 177 99 169 91Z"/><path d="M90.6 11.4C100 12 112 17 123 25.4C136 35 148 50 156.4 62.2C162 71 166 80 169 91C167 98 161 102 156 102C151 102 146.5 101 143.8 99.5C141 110 131 117 120.4 117C110 117 100 110 97.7 100.8C95 110 87 116.6 78.4 116.6C69 116.6 60.5 108 58.2 97.3C55 101 48 102.5 40.7 102.2C33 102 27 98 24.9 93C22.5 88 22.5 84 23.5 79.8C25 73 28 68 32 64C38 58 45 54 53 50C61 46 68 43 74 37.7C80 33 84.5 28 86.300 23.7C88 19.5 89.5 15 90.6 11.4Z"/></g><path d="M86.3 23.7C88 19.5 89.5 15 90.6 11.4C100 12 106 14 112 17.5" fill="none" stroke="#000" stroke-width="22" stroke-linejoin="miter" stroke-miterlimit="4"/></g><g transform="translate(1308.3 1141.1) scale(0.7322)"><g fill="#000" stroke="#000" stroke-width="22" stroke-linejoin="round"><path d="M22.3 137.6L173 137.6L164.3 214Q163 226 152 226L44 226Q32.5 226 31 214Z"/><path d="M24.9 93C17 100 10.9 109 10.9 118.3C10.9 128 16 134 22.3 137.6L24.5 165.3A5.45 5.7 0 0 0 35.4 165.3L35.4 146A5.7 5.7 0 0 1 46.8 146L46.8 159.9A6.6 6.6 0 0 0 60 159.9L60 142.4A6.5 6.5 0 0 1 73 142.4L73 168.7A6.65 6.65 0 0 0 86.3 168.7L86.3 137.1A6.55 6.55 0 0 1 99.4 137.1L99.4 152.5A6.15 6.15 0 0 0 111.7 152.5L111.7 145.5A6.15 6.15 0 0 1 124 145.5L124 176.7A6.5 6.5 0 0 0 137 176.7L137 146.5A6.2 6.2 0 0 1 149.4 146.5L149.4 175.3A7 7 0 0 0 163.4 175.3L163.4 150C163.4 143 168 139 173 137.6C180 134 184.4 128 184.4 120C184.4 109 177 99 169 91Z"/><path d="M90.6 11.4C100 12 112 17 123 25.4C136 35 148 50 156.4 62.2C162 71 166 80 169 91C167 98 161 102 156 102C151 102 146.5 101 143.8 99.5C141 110 131 117 120.4 117C110 117 100 110 97.7 100.8C95 110 87 116.6 78.4 116.6C69 116.6 60.5 108 58.2 97.3C55 101 48 102.5 40.7 102.2C33 102 27 98 24.9 93C22.5 88 22.5 84 23.5 79.8C25 73 28 68 32 64C38 58 45 54 53 50C61 46 68 43 74 37.7C80 33 84.5 28 86.300 23.7C88 19.5 89.5 15 90.6 11.4Z"/></g><path d="M86.3 23.7C88 19.5 89.5 15 90.6 11.4C100 12 106 14 112 17.5" fill="none" stroke="#000" stroke-width="22" stroke-linejoin="miter" stroke-miterlimit="4"/></g><g transform="translate(1304.1 1139.1) scale(0.7322)"><g fill="#000" stroke="#000" stroke-width="22" stroke-linejoin="round"><path d="M22.3 137.6L173 137.6L164.3 214Q163 226 152 226L44 226Q32.5 226 31 214Z"/><path d="M24.9 93C17 100 10.9 109 10.9 118.3C10.9 128 16 134 22.3 137.6L24.5 165.3A5.45 5.7 0 0 0 35.4 165.3L35.4 146A5.7 5.7 0 0 1 46.8 146L46.8 159.9A6.6 6.6 0 0 0 60 159.9L60 142.4A6.5 6.5 0 0 1 73 142.4L73 168.7A6.65 6.65 0 0 0 86.3 168.7L86.3 137.1A6.55 6.55 0 0 1 99.4 137.1L99.4 152.5A6.15 6.15 0 0 0 111.7 152.5L111.7 145.5A6.15 6.15 0 0 1 124 145.5L124 176.7A6.5 6.5 0 0 0 137 176.7L137 146.5A6.2 6.2 0 0 1 149.4 146.5L149.4 175.3A7 7 0 0 0 163.4 175.3L163.4 150C163.4 143 168 139 173 137.6C180 134 184.4 128 184.4 120C184.4 109 177 99 169 91Z"/><path d="M90.6 11.4C100 12 112 17 123 25.4C136 35 148 50 156.4 62.2C162 71 166 80 169 91C167 98 161 102 156 102C151 102 146.5 101 143.8 99.5C141 110 131 117 120.4 117C110 117 100 110 97.7 100.8C95 110 87 116.6 78.4 116.6C69 116.6 60.5 108 58.2 97.3C55 101 48 102.5 40.7 102.2C33 102 27 98 24.9 93C22.5 88 22.5 84 23.5 79.8C25 73 28 68 32 64C38 58 45 54 53 50C61 46 68 43 74 37.7C80 33 84.5 28 86.300 23.7C88 19.5 89.5 15 90.6 11.4Z"/></g><path d="M86.3 23.7C88 19.5 89.5 15 90.6 11.4C100 12 106 14 112 17.5" fill="none" stroke="#000" stroke-width="22" stroke-linejoin="miter" stroke-miterlimit="4"/></g><g transform="translate(1300.0 1137.0) scale(0.7322)"><g fill="#000" stroke="#000" stroke-width="22" stroke-linejoin="round"><path d="M22.3 137.6L173 137.6L164.3 214Q163 226 152 226L44 226Q32.5 226 31 214Z"/><path d="M24.9 93C17 100 10.9 109 10.9 118.3C10.9 128 16 134 22.3 137.6L24.5 165.3A5.45 5.7 0 0 0 35.4 165.3L35.4 146A5.7 5.7 0 0 1 46.8 146L46.8 159.9A6.6 6.6 0 0 0 60 159.9L60 142.4A6.5 6.5 0 0 1 73 142.4L73 168.7A6.65 6.65 0 0 0 86.3 168.7L86.3 137.1A6.55 6.55 0 0 1 99.4 137.1L99.4 152.5A6.15 6.15 0 0 0 111.7 152.5L111.7 145.5A6.15 6.15 0 0 1 124 145.5L124 176.7A6.5 6.5 0 0 0 137 176.7L137 146.5A6.2 6.2 0 0 1 149.4 146.5L149.4 175.3A7 7 0 0 0 163.4 175.3L163.4 150C163.4 143 168 139 173 137.6C180 134 184.4 128 184.4 120C184.4 109 177 99 169 91Z"/><path d="M90.6 11.4C100 12 112 17 123 25.4C136 35 148 50 156.4 62.2C162 71 166 80 169 91C167 98 161 102 156 102C151 102 146.5 101 143.8 99.5C141 110 131 117 120.4 117C110 117 100 110 97.7 100.8C95 110 87 116.6 78.4 116.6C69 116.6 60.5 108 58.2 97.3C55 101 48 102.5 40.7 102.2C33 102 27 98 24.9 93C22.5 88 22.5 84 23.5 79.8C25 73 28 68 32 64C38 58 45 54 53 50C61 46 68 43 74 37.7C80 33 84.5 28 86.300 23.7C88 19.5 89.5 15 90.6 11.4Z"/></g><path d="M86.3 23.7C88 19.5 89.5 15 90.6 11.4C100 12 106 14 112 17.5" fill="none" stroke="#000" stroke-width="22" stroke-linejoin="miter" stroke-miterlimit="4"/><g stroke="#1a0f08" stroke-width="1.5" stroke-linejoin="round"><path d="M22.3 137.6L173 137.6L164.3 214Q163 226 152 226L44 226Q32.5 226 31 214Z" fill="#ffe2a6"/><rect x="84" y="126" width="18" height="14" fill="#ffe2a6" stroke="none"/><path d="M24.9 93C17 100 10.9 109 10.9 118.3C10.9 128 16 134 22.3 137.6L24.5 165.3A5.45 5.7 0 0 0 35.4 165.3L35.4 146A5.7 5.7 0 0 1 46.8 146L46.8 159.9A6.6 6.6 0 0 0 60 159.9L60 142.4A6.5 6.5 0 0 1 73 142.4L73 168.7A6.65 6.65 0 0 0 86.3 168.7L86.3 137.1A6.55 6.55 0 0 1 99.4 137.1L99.4 152.5A6.15 6.15 0 0 0 111.7 152.5L111.7 145.5A6.15 6.15 0 0 1 124 145.5L124 176.7A6.5 6.5 0 0 0 137 176.7L137 146.5A6.2 6.2 0 0 1 149.4 146.5L149.4 175.3A7 7 0 0 0 163.4 175.3L163.4 150C163.4 143 168 139 173 137.6C180 134 184.4 128 184.4 120C184.4 109 177 99 169 91Z" fill="#ffd6e6"/><path d="M90.6 11.4C100 12 112 17 123 25.4C136 35 148 50 156.4 62.2C162 71 166 80 169 91C167 98 161 102 156 102C151 102 146.5 101 143.8 99.5C141 110 131 117 120.4 117C110 117 100 110 97.7 100.8C95 110 87 116.6 78.4 116.6C69 116.6 60.5 108 58.2 97.3C55 101 48 102.5 40.7 102.2C33 102 27 98 24.9 93C22.5 88 22.5 84 23.5 79.8C25 73 28 68 32 64C38 58 45 54 53 50C61 46 68 43 74 37.7C80 33 84.5 28 86.300 23.7C88 19.5 89.5 15 90.6 11.4Z" fill="#faf5ef"/></g><g fill="none" stroke="#9a8f86" stroke-width="1.7" stroke-dasharray="8 3.5"><path d="M96.8 20C97 33 94 45 91.5 51.7C88 60 84 67 67 88.5"/><path d="M103.8 22C108 30 111 37 112.5 43C114.500 50 115 57 114.3 62.2C113.500 69 112 75 110 79.8"/><path d="M123 32.4C129 39 134 46 137 51.7C140 57 142 62 143.2 67.5C144 72 143.500 76 142.700 79.800"/></g><circle cx="70" cy="192.8" r="5.800" fill="#261c1c"/><circle cx="121.700" cy="192.800" r="5.800" fill="#261c1c"/><path d="M82.500 203.500v1.500a13.900 11 0 0 0 27.800 0v-1.500" fill="none" stroke="#261c1c" stroke-width="5" stroke-linecap="round"/></g><path d="M1374 1232L1458 1294" stroke="#fff" stroke-width="4.500"/><path d="M1374 1232L1456 1292.500" stroke="#000" stroke-width="1.500"/><path d="M1447 1293l14 3.500l-4-13" fill="#000" stroke="#fff" stroke-width="1.600"/><rect x="1460" y="1290" width="13" height="13" fill="#000" stroke="#fff" stroke-width="1.800"/><g stroke="#2a8fd8" stroke-width="2" fill="none"><rect x="1366.500" y="1220.500" width="15" height="15" fill="#fff" fill-opacity="0.600"/><path d="M1366.500 1220.500l15 15M1381.500 1220.500l-15 15"/></g></svg><div class="a" style="left:152.0px;top:288.0px;width:68.0px;height:1299.0px;background:#3a3a3a;border-radius:0 0 0 20px;"></div><div class="a" style="left:219.3px;top:288.0px;width:1.2px;height:1299.0px;background:#2e2e2e;"></div><div class="a" style="left:159.0px;top:296.0px;width:54.5px;height:56.0px;background:#222222;border-radius:7px;border:2px solid #0a0a0a;"></div><div class="a" style="left:160.0px;top:420.3px;width:53.0px;height:1.5px;background:#4a4a4a;"></div><div class="a" style="left:160.0px;top:556.3px;width:53.0px;height:1.5px;background:#4a4a4a;"></div><div class="a" style="left:160.0px;top:877.3px;width:53.0px;height:1.5px;background:#4a4a4a;"></div><div class="a" style="left:160.0px;top:951.0px;width:53.0px;height:1.5px;background:#4a4a4a;"></div><div class="a" style="left:160.0px;top:1084.7px;width:53.0px;height:1.5px;background:#4a4a4a;"></div><div class="a" style="left:160.0px;top:1220.3px;width:53.0px;height:1.5px;background:#4a4a4a;"></div><svg class="a" style="left:173.7px;top:308.3px;" width="24" height="32" viewBox="0 0 24 32"><path d="M5.800 3.500L7.400 24.800L11.600 20.600L15.600 30L18.700 28.600L14.700 19.400L19.800 18.800Z" fill="#c4c4c4"/></svg><svg class="a" style="left:201.7px;top:338.3px;" width="10" height="10" viewBox="0 0 10 10"><path d="M10 0V10H0z" fill="#b8b8b8"/></svg><svg class="a" style="left:169.7px;top:368.7px;" width="34" height="36" viewBox="0 0 34 36"><g fill="none" stroke="#c4c4c4" stroke-width="2.400" stroke-linecap="round" stroke-linejoin="round"><path d="M16 3c-8 4-12 11-11 18c.5 4 3 8 7 10"/><rect x="4" y="14" width="7" height="7" fill="#3a3a3a"/></g><path d="M17 13l1 17l3.500-3.500l3 7l3-1.300l-3-7l5-.5z" fill="#c4c4c4"/></svg><svg class="a" style="left:201.7px;top:400.7px;" width="10" height="10" viewBox="0 0 10 10"><path d="M10 0V10H0z" fill="#b8b8b8"/></svg><svg class="a" style="left:171.7px;top:445.2px;" width="28" height="28" viewBox="0 0 28 28"><g fill="none" stroke="#c4c4c4" stroke-width="3"><path d="M8 0v20.500h20"/><path d="M0 7.500h20.500v20.500"/></g></svg><svg class="a" style="left:201.7px;top:473.2px;" width="10" height="10" viewBox="0 0 10 10"><path d="M10 0V10H0z" fill="#b8b8b8"/></svg><svg class="a" style="left:169.7px;top:505.6px;" width="32" height="32" viewBox="0 0 32 32"><g fill="none" stroke="#c4c4c4" stroke-width="2.600" stroke-linecap="round"><circle cx="13" cy="13" r="10"/><path d="M20.500 20.500l9 9" stroke-width="3.400"/></g></svg><svg class="a" style="left:201.7px;top:535.6px;" width="10" height="10" viewBox="0 0 10 10"><path d="M10 0V10H0z" fill="#b8b8b8"/></svg><svg class="a" style="left:169.7px;top:576.0px;" width="32" height="36" viewBox="0 0 32 36"><g fill="none" stroke="#c4c4c4" stroke-width="1.900" stroke-linecap="round" stroke-linejoin="round"><path d="M9 3v12M3 9h12"/><path d="M9 20v8c0 3.500 4.500 3.500 4.500 0v-2.500c0-3.500 4.500-3.500 4.500 0v2.500c0 3.500 4.500 3.500 4.500 0v-2.500c0-2.500 3.500-3.500 5.500-1"/></g></svg><svg class="a" style="left:201.7px;top:608.0px;" width="10" height="10" viewBox="0 0 10 10"><path d="M10 0V10H0z" fill="#b8b8b8"/></svg><svg class="a" style="left:169.7px;top:638.6px;" width="32" height="36" viewBox="0 0 32 36"><path d="M3.500 11C3 4.500 9 2 12.500 3.500C17 5 17.500 9.500 16 13C14 17 12 20 13 23.500C14 27.500 18 29.500 22 28.500C27 27.500 30 22.500 29 18C28.500 15.500 27.500 13.500 26 12" fill="none" stroke="#c4c4c4" stroke-width="4.400" stroke-linecap="round" stroke-linejoin="round"/></svg><svg class="a" style="left:201.7px;top:670.6px;" width="10" height="10" viewBox="0 0 10 10"><path d="M10 0V10H0z" fill="#b8b8b8"/></svg><svg class="a" style="left:171.7px;top:704.0px;" width="28" height="28" viewBox="0 0 28 28"><rect x="1.500" y="1.500" width="25" height="25" fill="none" stroke="#c4c4c4" stroke-width="2.400"/></svg><svg class="a" style="left:201.7px;top:732.0px;" width="10" height="10" viewBox="0 0 10 10"><path d="M10 0V10H0z" fill="#b8b8b8"/></svg><svg class="a" style="left:171.7px;top:766.6px;" width="28" height="28" viewBox="0 0 28 28"><circle cx="14" cy="14" r="12.500" fill="none" stroke="#c4c4c4" stroke-width="2.400"/></svg><svg class="a" style="left:201.7px;top:794.6px;" width="10" height="10" viewBox="0 0 10 10"><path d="M10 0V10H0z" fill="#b8b8b8"/></svg><svg class="a" style="left:171.7px;top:829.8px;" width="28" height="24" viewBox="0 0 28 24"><path d="M1.500 12L8 1.500h12L26.500 12L20 22.500H8z" fill="none" stroke="#c4c4c4" stroke-width="2.400" stroke-linejoin="round"/></svg><svg class="a" style="left:201.7px;top:855.8px;" width="10" height="10" viewBox="0 0 10 10"><path d="M10 0V10H0z" fill="#b8b8b8"/></svg><span id="t69" class="t" style="top:896.9px;font-size:39px;color:#c4c4c4;left:185.7px;transform:translateX(-50%);transform:translateX(-50%) scaleX(1.080);">A</span><svg class="a" style="left:201.7px;top:930.0px;" width="10" height="10" viewBox="0 0 10 10"><path d="M10 0V10H0z" fill="#b8b8b8"/></svg><svg class="a" style="left:171.7px;top:974.0px;" width="28" height="28" viewBox="0 0 28 28"><g fill="none" stroke="#c4c4c4" stroke-width="2.200" stroke-linecap="round"><path d="M3.500 23.500L24.500 5.500"/><path d="M22 2.500l5 6M1 20.500l5 6"/></g></svg><svg class="a" style="left:201.7px;top:1002.0px;" width="10" height="10" viewBox="0 0 10 10"><path d="M10 0V10H0z" fill="#b8b8b8"/></svg><svg class="a" style="left:171.7px;top:1036.0px;" width="28" height="30" viewBox="0 0 28 30"><g fill="none" stroke="#c4c4c4" stroke-width="2.400" stroke-linecap="round" stroke-linejoin="round"><rect x="3" y="2" width="8" height="8" transform="rotate(45 7 6)"/><rect x="17" y="18" width="8" height="8" transform="rotate(45 21 22)"/><path d="M9 11c2 5 6 2 10 7"/></g></svg><svg class="a" style="left:201.7px;top:1065.0px;" width="10" height="10" viewBox="0 0 10 10"><path d="M10 0V10H0z" fill="#b8b8b8"/></svg><svg class="a" style="left:171.7px;top:1108.4px;" width="30" height="30" viewBox="0 0 30 30"><path d="M5 24v4.500h23.500V5H24V24z" fill="#b4b4b4"/><rect x="1.500" y="1.500" width="21" height="21" fill="none" stroke="#c4c4c4" stroke-width="2.600"/></svg><svg class="a" style="left:201.7px;top:1136.4px;" width="10" height="10" viewBox="0 0 10 10"><path d="M10 0V10H0z" fill="#b8b8b8"/></svg><svg class="a" style="left:172.7px;top:1172.0px;" width="26" height="26" viewBox="0 0 26 26"><rect x="0" y="0" width="26" height="26" fill="#c4c4c4"/><rect x="6.1" y="1.5" width="4.600" height="4.600" fill="#333"/><rect x="15.3" y="1.5" width="4.600" height="4.600" fill="#333"/><rect x="1.5" y="6.1" width="4.600" height="4.600" fill="#333"/><rect x="10.7" y="6.1" width="4.600" height="4.600" fill="#333"/><rect x="19.9" y="6.1" width="4.600" height="4.600" fill="#333"/><rect x="6.1" y="10.7" width="4.600" height="4.600" fill="#333"/><rect x="15.3" y="10.7" width="4.600" height="4.600" fill="#333"/><rect x="1.5" y="15.3" width="4.600" height="4.600" fill="#333"/><rect x="10.7" y="15.3" width="4.600" height="4.600" fill="#333"/><rect x="19.9" y="15.3" width="4.600" height="4.600" fill="#333"/><rect x="6.1" y="19.9" width="4.600" height="4.600" fill="#333"/><rect x="15.3" y="19.9" width="4.600" height="4.600" fill="#333"/></svg><svg class="a" style="left:170.7px;top:1242.6px;" width="30" height="32" viewBox="0 0 30 32"><path d="M3 29.500l1.500-5.500l11-11l4 4l-11 11z" fill="#d8d8d8" stroke="#c4c4c4" stroke-width="1.200"/><path d="M4.500 28l1.200-4l7-7l3 3l-7 7z" fill="#e07030"/><path d="M14 10l2.500-2.500l6 6l-2.500 2.500z" fill="#9a9a9a"/><path d="M19 3.500c3-3 8 2 5 5l-3 3l-5-5z" fill="#c4c4c4"/></svg><svg class="a" style="left:201.7px;top:1272.6px;" width="10" height="10" viewBox="0 0 10 10"><path d="M10 0V10H0z" fill="#b8b8b8"/></svg><svg class="a" style="left:170.7px;top:1305.0px;" width="32" height="34" viewBox="0 0 32 34"><path d="M2 17L14 5l12 12l-12 12z" fill="none" stroke="#c4c4c4" stroke-width="2.400" stroke-linejoin="round"/><path d="M7 17h14l-7 7z" fill="#e07b39"/><path d="M10 2l8 8" stroke="#c4c4c4" stroke-width="2.400"/><path d="M29 20c2 3 3 6 0 9c-3-3-2-6 0-9z" fill="#e07b39"/></svg><svg class="a" style="left:201.7px;top:1335.0px;" width="10" height="10" viewBox="0 0 10 10"><path d="M10 0V10H0z" fill="#b8b8b8"/></svg><div class="a" style="left:1849.0px;top:288.0px;width:583.0px;height:1299.0px;background:#2e2e2e;"></div><div class="a" style="left:1849.0px;top:288.0px;width:1.5px;height:1299.0px;background:#262626;"></div><div class="a" style="left:1850.5px;top:288.0px;width:581.5px;height:59.0px;background:#383838;"></div><div class="a" style="left:1850.5px;top:346.0px;width:581.5px;height:1.5px;background:#424242;"></div><div class="a" style="left:1850.5px;top:347.5px;width:581.5px;height:130.0px;background:#383838;"></div><svg class="a" style="left:1867.0px;top:308.0px;" width="22" height="22" viewBox="0 0 22 22"><path d="M2 2l18 18M20 2L2 20" stroke="#e4e4e4" stroke-width="2.400" stroke-linecap="round"/></svg><span id="t70" class="t" style="top:306.3px;font-size:26px;color:#e0e0e0;letter-spacing:0.12px;left:2140.8px;transform:translateX(-50%);">Learn</span><div class="a" style="left:1866.5px;top:364.0px;width:55.5px;height:44.0px;background:#232323;border-radius:5px;border:2px solid #0c0c0c;"></div><svg class="a" style="left:1881.0px;top:371.0px;" width="30" height="30" viewBox="0 0 30 30"><path d="M3 3l1.500 20l4.500-4.500l4 9l3.500-1.500l-4-9l6.500-.5z" fill="#c4c4c4"/></svg><span id="t71" class="t" style="top:370.7px;font-size:19px;color:#c4c4c4;font-weight:700;left:1896.5px;">?</span><span id="t72" class="t" style="top:428.8px;font-size:25px;color:#dedede;letter-spacing:0.01px;left:1864.5px;">Hints</span><span id="t73" class="t" style="top:505.9px;font-size:33px;color:#ececec;letter-spacing:-0.03px;left:1866.0px;">Select objects</span><svg class="a" style="left:1877.0px;top:576.0px;" width="22" height="34" viewBox="0 0 22 34"><path d="M3 2l2 24l5-5l4.500 10.500l4-1.800l-4.500-10l7-.5z" fill="#9c9c9c"/></svg><span id="t74" class="t" style="top:579.5px;font-size:24.5px;color:#e4e4e4;letter-spacing:0.41px;left:1916.8px;"><b>Pick</b> tool</span><span id="t75" class="t" style="top:645.5px;font-size:24.5px;color:#e4e4e4;letter-spacing:0.56px;left:1908.7px;">To select an object, click it.Hold down</span><div class="a" style="left:1869.0px;top:656.8px;width:5.5px;height:5.5px;background:#d8d8d8;border-radius:50%;"></div><span id="t76" class="t" style="top:683.3px;font-size:24.5px;color:#e4e4e4;letter-spacing:0.53px;left:1906.0px;"><b>Option</b> to select an object that is behind</span><span id="t77" class="t" style="top:721.5px;font-size:24.5px;color:#e4e4e4;letter-spacing:0.53px;left:1906.0px;">another object, or hold down <b>Command</b> to</span><span id="t78" class="t" style="top:759.4px;font-size:24.5px;color:#e4e4e4;letter-spacing:0.55px;left:1906.0px;">select an object from within a group.</span><span id="t79" class="t" style="top:817.4px;font-size:24.5px;color:#e4e4e4;letter-spacing:0.57px;left:1908.7px;">To select multiple objects, hold down <b>Shift</b></span><div class="a" style="left:1869.0px;top:828.7px;width:5.5px;height:5.5px;background:#d8d8d8;border-radius:50%;"></div><span id="t80" class="t" style="top:855.3px;font-size:24.5px;color:#e4e4e4;letter-spacing:0.53px;left:1906.0px;">and click each object, or drag to form a</span><span id="t81" class="t" style="top:893.1px;font-size:24.5px;color:#e4e4e4;letter-spacing:0.47px;left:1906.0px;">marquee around the objects.</span><span id="t82" class="t" style="top:951.1px;font-size:24.5px;color:#e4e4e4;letter-spacing:0.62px;left:1908.7px;">To select all objects, double-click the <b>Pick</b></span><div class="a" style="left:1869.0px;top:962.4px;width:5.5px;height:5.5px;background:#d8d8d8;border-radius:50%;"></div><span id="t83" class="t" style="top:989.3px;font-size:24.5px;color:#e4e4e4;letter-spacing:0.67px;left:1906.0px;">tool.</span><div class="a" style="left:1865.6px;top:1050.0px;width:554.5px;height:2.2px;background:#d2d2d2;"></div><span id="t84" class="t" style="top:1077.5px;font-size:24.5px;color:#ececec;font-weight:700;letter-spacing:0.37px;left:2140.9px;transform:translateX(-50%);">Your voice matters</span><div class="a" style="left:1850.5px;top:1532.5px;width:581.5px;height:54.5px;background:#383838;"></div><div class="a" style="left:1857.5px;top:1539.0px;width:53.5px;height:42.0px;background:#505050;border-radius:5px;border:1.500px solid #6a6a6a;"></div><svg class="a" style="left:1869.0px;top:1544.0px;" width="30" height="32" viewBox="0 0 30 32"><g fill="none" stroke="#e0e0e0" stroke-width="2" stroke-linejoin="round"><path d="M3 15L15 3l12 12"/><path d="M6 14v15h18V14"/><path d="M9 9V3h4v2"/></g></svg><div class="a" style="left:2317.0px;top:1538.0px;width:108.5px;height:43.0px;background:#4e4e4e;border-radius:5px;"></div><div class="a" style="left:2371.0px;top:1538.0px;width:1.5px;height:43.0px;background:#5c5c5c;"></div><svg class="a" style="left:2331.0px;top:1549.0px;" width="28" height="22" viewBox="0 0 28 22"><path d="M12 2L2 11l10 9v-5h14V7H12z" fill="none" stroke="#646464" stroke-width="2"/></svg><svg class="a" style="left:2384.0px;top:1549.0px;" width="28" height="22" viewBox="0 0 28 22"><path d="M16 2l10 9l-10 9v-5H2V7h14z" fill="none" stroke="#646464" stroke-width="2"/></svg><div class="a" style="left:2432.0px;top:288.0px;width:58.5px;height:1299.0px;background:#3a3a3a;"></div><div class="a" style="left:2432.0px;top:288.0px;width:1.5px;height:1299.0px;background:#484848;"></div><div class="a" style="left:2433.5px;top:288.0px;width:57.0px;height:58.0px;background:#262626;"></div><svg class="a" style="left:2445.0px;top:302.0px;" width="34" height="32" viewBox="0 0 34 32"><path d="M17 2L1 9l16 7l16-7z" fill="#c4c4c4"/><path d="M7 14v9c2 4 6 6 10 6s8-2 10-6v-9l-10 4.500z" fill="#c4c4c4"/><path d="M28 11v10" stroke="#c4c4c4" stroke-width="2.400"/></svg><svg class="a" style="left:2446.0px;top:360.0px;" width="32" height="32" viewBox="0 0 32 32"><g fill="none" stroke="#c4c4c4" stroke-width="2"><path d="M4 4h24M4 4v24"/></g><g fill="#c4c4c4"><rect x="1" y="1" width="6" height="6"/><rect x="25" y="1" width="6" height="6"/><rect x="1" y="25" width="6" height="6"/><rect x="14" y="13" width="4" height="4"/><rect x="20" y="13.500" width="10" height="3"/><rect x="14" y="20" width="4" height="4"/><rect x="20" y="20.500" width="10" height="3"/><rect x="14" y="27" width="4" height="4"/><rect x="20" y="27.500" width="10" height="3"/></g></svg><svg class="a" style="left:2446.0px;top:420.0px;" width="32" height="30" viewBox="0 0 32 30"><path d="M16 2L2 10l14 8l14-8z" fill="none" stroke="#c4c4c4" stroke-width="2.200" stroke-linejoin="round"/><path d="M2 18l14 9l14-9l-5-3l-9 5l-9-5z" fill="#c4c4c4"/></svg><div class="a" style="left:2450.0px;top:1558.0px;width:6.0px;height:6.0px;background:#d8d8d8;border-radius:50%;"></div><div class="a" style="left:2459.0px;top:1558.0px;width:6.0px;height:6.0px;background:#d8d8d8;border-radius:50%;"></div><div class="a" style="left:2468.0px;top:1558.0px;width:6.0px;height:6.0px;background:#d8d8d8;border-radius:50%;"></div><div class="a" style="left:2490.5px;top:288.0px;width:61.5px;height:1299.0px;background:#3c3c3c;border-radius:0 0 20px 0;"></div><div class="a" style="left:2490.5px;top:288.0px;width:1.5px;height:1299.0px;background:#4a4a4a;"></div><div class="a" style="left:2506.0px;top:303.0px;width:32.0px;height:30.0px;background:#ffffff;border-radius:5px;overflow:hidden;"><svg class="a" style="left:0;top:0" width="32" height="30"><path d="M4 27L28 3" stroke="#333" stroke-width="1.200"/></svg></div><div class="a" style="left:2506.0px;top:340.4px;width:32.0px;height:32.3px;background:#000000;border-radius:5px 5px 0 0;"></div><div class="a" style="left:2506.0px;top:372.4px;width:32.0px;height:32.3px;background:#1f1f1f;"></div><div class="a" style="left:2506.0px;top:404.3px;width:32.0px;height:32.3px;background:#333333;"></div><div class="a" style="left:2506.0px;top:436.3px;width:32.0px;height:32.3px;background:#4d4d4d;"></div><div class="a" style="left:2506.0px;top:468.3px;width:32.0px;height:32.3px;background:#666666;"></div><div class="a" style="left:2506.0px;top:500.2px;width:32.0px;height:32.3px;background:#808080;"></div><div class="a" style="left:2506.0px;top:532.2px;width:32.0px;height:32.3px;background:#999999;"></div><div class="a" style="left:2506.0px;top:564.2px;width:32.0px;height:32.3px;background:#b3b3b3;"></div><div class="a" style="left:2506.0px;top:596.2px;width:32.0px;height:32.3px;background:#cccccc;"></div><div class="a" style="left:2506.0px;top:628.1px;width:32.0px;height:32.3px;background:#e6e6e6;"></div><div class="a" style="left:2506.0px;top:660.1px;width:32.0px;height:32.3px;background:#ffffff;"></div><div class="a" style="left:2506.0px;top:692.1px;width:32.0px;height:32.3px;background:#0000ff;"></div><div class="a" style="left:2506.0px;top:724.0px;width:32.0px;height:32.3px;background:#00ffff;"></div><div class="a" style="left:2506.0px;top:756.0px;width:32.0px;height:32.3px;background:#00ff00;"></div><div class="a" style="left:2506.0px;top:788.0px;width:32.0px;height:32.3px;background:#ffff00;"></div><div class="a" style="left:2506.0px;top:819.9px;width:32.0px;height:32.3px;background:#ff0000;"></div><div class="a" style="left:2506.0px;top:851.9px;width:32.0px;height:32.3px;background:#ff00ff;"></div><div class="a" style="left:2506.0px;top:883.9px;width:32.0px;height:32.3px;background:#9900cc;"></div><div class="a" style="left:2506.0px;top:915.9px;width:32.0px;height:32.3px;background:#ff6600;"></div><div class="a" style="left:2506.0px;top:947.8px;width:32.0px;height:32.3px;background:#ff99cc;"></div><div class="a" style="left:2506.0px;top:979.8px;width:32.0px;height:32.3px;background:#663333;"></div><div class="a" style="left:2506.0px;top:1011.8px;width:32.0px;height:32.3px;background:#d4d0ff;"></div><div class="a" style="left:2506.0px;top:1043.7px;width:32.0px;height:32.3px;background:#9999ff;"></div><div class="a" style="left:2506.0px;top:1075.7px;width:32.0px;height:32.3px;background:#66a0ff;"></div><div class="a" style="left:2506.0px;top:1107.7px;width:32.0px;height:32.3px;background:#6666ff;"></div><div class="a" style="left:2506.0px;top:1139.7px;width:32.0px;height:32.3px;background:#6a6acc;"></div><div class="a" style="left:2506.0px;top:1171.6px;width:32.0px;height:32.3px;background:#003399;"></div><div class="a" style="left:2506.0px;top:1203.6px;width:32.0px;height:32.3px;background:#000066;"></div><div class="a" style="left:2506.0px;top:1235.6px;width:32.0px;height:32.3px;background:#336699;"></div><div class="a" style="left:2506.0px;top:1267.5px;width:32.0px;height:32.3px;background:#00ccff;"></div><div class="a" style="left:2506.0px;top:1299.5px;width:32.0px;height:32.3px;background:#99ffff;"></div><div class="a" style="left:2506.0px;top:1331.5px;width:32.0px;height:32.3px;background:#a3cccc;"></div><div class="a" style="left:2506.0px;top:1363.4px;width:32.0px;height:32.3px;background:#669999;"></div><div class="a" style="left:2506.0px;top:1395.4px;width:32.0px;height:32.3px;background:#336666;"></div><div class="a" style="left:2506.0px;top:1427.4px;width:32.0px;height:32.3px;background:#003333;"></div><div class="a" style="left:2506.0px;top:1459.3px;width:32.0px;height:32.3px;background:#006633;"></div><div class="a" style="left:2506.0px;top:1491.3px;width:32.0px;height:32.3px;background:#009933;"></div><div class="a" style="left:2506.0px;top:1523.3px;width:32.0px;height:20.7px;background:#339966;"></div><svg class="a" style="left:2513.0px;top:1555.0px;" width="16" height="12" viewBox="0 0 16 12"><path d="M2 3l6 6l6-6" fill="none" stroke="#0c0c0c" stroke-width="2.600" stroke-linecap="round" stroke-linejoin="round"/></svg></div>
</body></html>
